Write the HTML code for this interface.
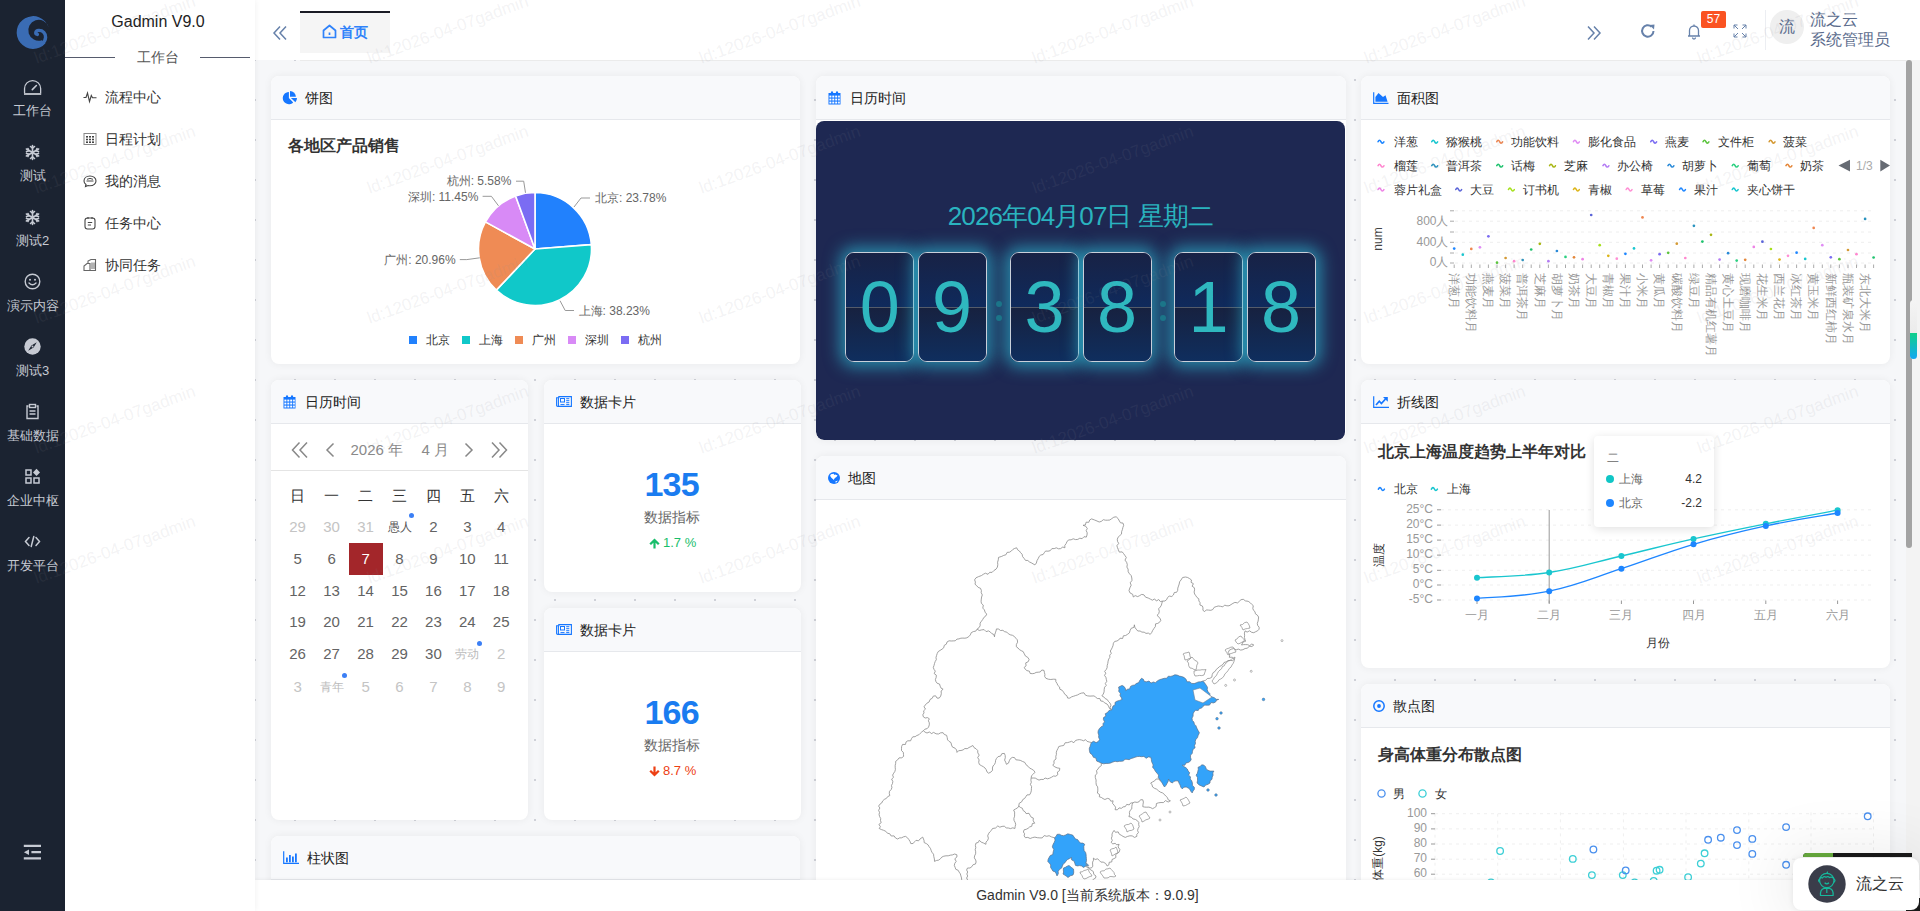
<!DOCTYPE html>
<html><head><meta charset="utf-8">
<style>
*{box-sizing:border-box;margin:0;padding:0}
html,body{width:1920px;height:911px;overflow:hidden;background:#f3f4f7;font-family:"Liberation Sans",sans-serif;color:#333}
.abs{position:absolute}
#s1{left:0;top:0;width:65px;height:911px;background:#1b2331}
#s2{left:65px;top:0;width:190px;height:911px;background:#fff;z-index:2;box-shadow:1px 0 6px rgba(0,0,0,0.05)}
#hd{left:255px;top:0;width:1665px;height:60px;background:#fff}
#ct{left:255px;top:60px;width:1665px;height:820px;background-color:#f6f7f9;
 background-image:radial-gradient(circle,#cfd1d8 1px,transparent 1.3px),radial-gradient(circle,#cfd1d8 1px,transparent 1.3px);background-size:40px 40px,40px 40px;background-position:-20px -20px,0 0}
#ft{left:255px;top:880px;width:1665px;height:31px;background:#fff;box-shadow:0 -1px 3px rgba(0,0,0,0.05);text-align:center;font-size:14px;line-height:31px;color:#333}
.card{position:absolute;background:#fff;border-radius:8px;box-shadow:0 0 8px rgba(0,0,0,0.06);overflow:hidden}
.ch{position:absolute;left:0;top:0;right:0;height:44px;background:#f8f9fb;border-bottom:1px solid #e6e8ec;font-size:14px;line-height:44px;color:#222}
.ch .t{position:absolute;left:34px;top:0}
.ch svg{position:absolute;left:12px;top:15px}
.mi{position:absolute;left:0;width:65px;text-align:center;color:#c6cad3;font-size:13px}
.mi .ic{position:absolute;left:24px;width:17px;height:17px}
.mt{position:absolute;left:0;width:65px;text-align:center;line-height:16px}
.sm{position:absolute;left:83px;font-size:14px;color:#333;line-height:16px}
.sm span{position:absolute;left:22px;top:0;white-space:nowrap}
.sm svg{position:absolute;left:0;top:1px}
.fd{position:absolute;top:176.2px;width:69px;height:109.5px;border:1.3px solid #c9d0da;border-radius:9px;overflow:hidden;box-shadow:0 0 16px 5px rgba(45,182,208,0.68),inset 0 0 12px rgba(45,175,200,0.25)}
.fdt{position:absolute;left:0;top:0;width:100%;height:50%;background:linear-gradient(#182245,#0f2a5c)}
.fdb{position:absolute;left:0;top:50%;width:100%;height:50%;background:linear-gradient(#17213f,#0f2e5e)}
.fdl{position:absolute;left:0;top:53.5px;width:100%;height:1.5px;background:#545b6a}
.fdn{position:absolute;left:0;top:0;width:100%;height:100%;text-align:center;font-size:72px;line-height:108px;color:#2fb8bf}
.fc{position:absolute;width:6px;height:6px;border-radius:50%;background:#1b7589}
.cd{position:absolute;width:34px;height:20px;line-height:20px;text-align:center;font-size:15px;white-space:nowrap}
.wm{position:absolute;font-size:17px;line-height:20px;white-space:nowrap;color:rgba(140,140,150,0.11);transform:rotate(-20deg);transform-origin:0 16px}
</style></head><body>
<div id="s1" class="abs">
<svg class="abs" style="left:0;top:0" width="65" height="65" viewBox="0 0 65 65">
<path d="M48.6 27.2 A16.4 16.4 0 1 0 45.5 43.2 L41.8 40.2 A10.4 10.4 0 1 1 48.6 27.2 Z" fill="#3a6cb4"/>
<path d="M37.4 34.4 C35 33.8 35.2 30.6 38.6 30.4 C43 30.2 45.8 33.5 45.6 37.3 C45.2 42.5 40.5 45.8 34 46" fill="none" stroke="#3a6cb4" stroke-width="3.4" stroke-linecap="round"/>
</svg>
<div class="mi" style="top:78px">
 <svg class="ic" style="top:1px;left:23px;width:19px;height:17px" viewBox="0 0 19 17" width="19" height="17"><path d="M1.55 14.2 V9.6 A8.05 8.05 0 0 1 17.65 9.6 V14.2" fill="none" stroke="#c6cad3" stroke-width="1.3"/><path d="M1 15 H18.2" stroke="#b4b8c0" stroke-width="2"/><path d="M9.3 10.6 L13.4 6.5" stroke="#c6cad3" stroke-width="1.6" stroke-linecap="round"/></svg>
 <div class="mt" style="top:25px">工作台</div></div>
<div class="mi" style="top:143px">
 <svg class="ic" style="top:1px" viewBox="0 0 17 17" width="17" height="17"><g stroke="#c6cad3" stroke-width="1.6" stroke-linecap="round"><path d="M8.5 1.5 V15.5 M2.4 5 L14.6 12 M2.4 12 L14.6 5"/><path d="M6.5 2.5 L8.5 4.2 L10.5 2.5 M6.5 14.5 L8.5 12.8 L10.5 14.5 M2.5 7.6 L4.8 7 L4 4.6 M14.5 9.4 L12.2 10 L13 12.4 M2.5 9.4 L4.8 10 L4 12.4 M14.5 7.6 L12.2 7 L13 4.6" fill="none"/></g></svg>
 <div class="mt" style="top:25px">测试</div></div>
<div class="mi" style="top:208px">
 <svg class="ic" style="top:1px" viewBox="0 0 17 17" width="17" height="17"><g stroke="#c6cad3" stroke-width="1.6" stroke-linecap="round"><path d="M8.5 1.5 V15.5 M2.4 5 L14.6 12 M2.4 12 L14.6 5"/><path d="M6.5 2.5 L8.5 4.2 L10.5 2.5 M6.5 14.5 L8.5 12.8 L10.5 14.5 M2.5 7.6 L4.8 7 L4 4.6 M14.5 9.4 L12.2 10 L13 12.4 M2.5 9.4 L4.8 10 L4 12.4 M14.5 7.6 L12.2 7 L13 4.6" fill="none"/></g></svg>
 <div class="mt" style="top:25px">测试2</div></div>
<div class="mi" style="top:273px">
 <svg class="ic" style="top:0" viewBox="0 0 17 17" width="19" height="19" style="left:23px"><circle cx="8.5" cy="8.5" r="7.3" fill="none" stroke="#c6cad3" stroke-width="1.4"/><circle cx="6" cy="6.8" r="1" fill="#c6cad3"/><circle cx="11" cy="6.8" r="1" fill="#c6cad3"/><path d="M5 10 Q8.5 13.5 12 10" fill="none" stroke="#c6cad3" stroke-width="1.4" stroke-linecap="round"/></svg>
 <div class="mt" style="top:25px">演示内容</div></div>
<div class="mi" style="top:338px">
 <svg class="ic" style="top:0" viewBox="0 0 17 17" width="17" height="17"><circle cx="8.5" cy="8.5" r="8.2" fill="#c6cad3"/><path d="M12.8 4.2 L9.6 9.6 L4.2 12.8 L7.4 7.4 Z" fill="#1b2331"/><circle cx="8.5" cy="8.5" r="1" fill="#c6cad3"/></svg>
 <div class="mt" style="top:25px">测试3</div></div>
<div class="mi" style="top:403px">
 <svg class="ic" style="top:0" viewBox="0 0 17 17" width="17" height="17"><g fill="none" stroke="#c6cad3" stroke-width="1.4"><path d="M4.5 3 H3 V15.5 H14 V3 H12.5"/><rect x="5.5" y="1.5" width="6" height="3"/><path d="M5.5 8 H11.5 M5.5 11 H11.5"/></g></svg>
 <div class="mt" style="top:25px">基础数据</div></div>
<div class="mi" style="top:468px">
 <svg class="ic" style="top:0" viewBox="0 0 17 17" width="17" height="17"><g fill="none" stroke="#c6cad3" stroke-width="1.5"><rect x="2" y="2" width="5" height="5"/><rect x="2" y="10" width="5" height="5"/><rect x="10" y="10" width="5" height="5"/></g><path d="M12.5 0.8 L16 4.4 L12.5 8 L9 4.4 Z" fill="#c6cad3"/></svg>
 <div class="mt" style="top:25px">企业中枢</div></div>
<div class="mi" style="top:533px">
 <svg class="ic" style="top:0" viewBox="0 0 17 17" width="17" height="17"><g fill="none" stroke="#c6cad3" stroke-width="1.5" stroke-linecap="round"><path d="M5 4.5 L1.5 8.5 L5 12.5 M12 4.5 L15.5 8.5 L12 12.5 M9.8 3.5 L7.2 13.5"/></g></svg>
 <div class="mt" style="top:25px">开发平台</div></div>
<svg class="abs" style="left:22px;top:843px" width="20" height="18" viewBox="0 0 20 18"><g stroke="#c6cad3" stroke-width="2.3" stroke-linecap="butt"><path d="M1.8 2.8 H19 M9.4 9.2 H19 M1.8 15.4 H19"/></g><path d="M7 6.5 L1.9 9.2 L7 12 Z" fill="#c6cad3"/></svg>
</div>
<div id="s2" class="abs">
<div class="abs" style="left:-2px;top:12px;width:190px;text-align:center;font-size:16px;line-height:20px;color:#222">Gadmin V9.0</div>
<div class="abs" style="left:0;top:57px;width:50px;height:1px;background:#565b6d"></div>
<div class="abs" style="left:135px;top:57px;width:50px;height:1px;background:#565b6d"></div>
<div class="abs" style="left:50px;top:48px;width:85px;text-align:center;font-size:14px;line-height:18px;color:#555">工作台</div>
<div class="sm" style="top:89px;left:18px"><svg width="14" height="14" viewBox="0 0 14 14"><path d="M0.5 7.5 H3 L4.5 3 L6.5 11.5 L8.3 5.5 L9.5 7.8 H13.5" fill="none" stroke="#444" stroke-width="1.1"/></svg><span>流程中心</span></div>
<div class="sm" style="top:131px;left:18px"><svg width="14" height="14" viewBox="0 0 14 14"><rect x="1" y="1.5" width="12" height="11" fill="none" stroke="#888" stroke-width="1"/><g fill="#444"><rect x="3" y="4" width="2" height="1.6"/><rect x="6" y="4" width="2" height="1.6"/><rect x="9" y="4" width="2" height="1.6"/><rect x="3" y="6.7" width="2" height="1.6"/><rect x="6" y="6.7" width="2" height="1.6"/><rect x="9" y="6.7" width="2" height="1.6"/><rect x="3" y="9.4" width="2" height="1.6"/><rect x="6" y="9.4" width="2" height="1.6"/><rect x="9" y="9.4" width="2" height="1.6"/></g></svg><span>日程计划</span></div>
<div class="sm" style="top:173px;left:18px"><svg width="14" height="14" viewBox="0 0 14 14"><path d="M7 2 C3.5 2 1 4.2 1 7 C1 8.5 1.8 9.7 3 10.5 L2.5 12.5 L5 11.5 C5.6 11.7 6.3 11.8 7 11.8 C10.5 11.8 13 9.6 13 7 C13 4.2 10.5 2 7 2 Z" fill="none" stroke="#444" stroke-width="1.1"/><path d="M3.5 7 H10.5 M4 5.3 Q7 3.5 10 5.3" fill="none" stroke="#444" stroke-width="1"/></svg><span>我的消息</span></div>
<div class="sm" style="top:215px;left:18px"><svg width="14" height="14" viewBox="0 0 14 14"><rect x="2" y="2" width="10" height="11" rx="2.5" fill="none" stroke="#444" stroke-width="1.1"/><path d="M5 1 V3 M9 1 V3 M4.8 6.5 H9.2 M4.8 9 H8" stroke="#444" stroke-width="1.1"/></svg><span>任务中心</span></div>
<div class="sm" style="top:257px;left:18px"><svg width="14" height="14" viewBox="0 0 14 14"><path d="M1 12.5 V8 L4 5.5 H7 V12.5 Z M5 5.5 V3 L8 1.5 H12.5 V12.5 H7" fill="none" stroke="#666" stroke-width="1.1"/><path d="M9 4.5 V11 M11 4.5 V11" stroke="#666" stroke-width="1"/></svg><span>协同任务</span></div>
</div>
<div id="hd" class="abs">
<svg class="abs" style="left:17px;top:25px" width="16" height="16" viewBox="0 0 16 16"><path d="M8 1.5 L2 8 L8 14.5 M14 1.5 L8 8 L14 14.5" fill="none" stroke="#6681aa" stroke-width="1.5"/></svg>
<div class="abs" style="left:45px;top:11px;width:90px;height:2px;background:#191b24"></div>
<div class="abs" style="left:45px;top:13px;width:90px;height:40px;background:#f5f5f5"></div>
<svg class="abs" style="left:67px;top:24px" width="15" height="15" viewBox="0 0 15 15"><path d="M1.5 6.5 L7.5 1.5 L13.5 6.5 V13.5 H1.5 Z" fill="none" stroke="#2f82fa" stroke-width="1.7" stroke-linejoin="round"/><path d="M7.5 8.5 V11" stroke="#2f82fa" stroke-width="1.7"/></svg>
<div class="abs" style="left:85px;top:23px;font-size:14px;line-height:18px;color:#2f82fa;font-weight:bold">首页</div>
<svg class="abs" style="left:1331px;top:25px" width="16" height="16" viewBox="0 0 16 16"><path d="M2 1.5 L8 8 L2 14.5 M8 1.5 L14 8 L8 14.5" fill="none" stroke="#6681aa" stroke-width="1.5"/></svg>
<svg class="abs" style="left:1385px;top:23px" width="16" height="16" viewBox="0 0 16 16"><path d="M13.5 8 A5.7 5.7 0 1 1 11.6 3.7" fill="none" stroke="#6681aa" stroke-width="2"/><path d="M9.5 2 L14.5 1.5 L14 6.5 Z" fill="#6681aa"/></svg>
<svg class="abs" style="left:1431px;top:23px" width="16" height="17" viewBox="0 0 16 17"><path d="M2 13 H14 M3.5 13 V7.5 A4.5 4.5 0 0 1 12.5 7.5 V13 M8 1.5 V3 M6.5 14.5 A1.5 1.5 0 0 0 9.5 14.5" fill="none" stroke="#6681aa" stroke-width="1.3"/></svg>
<div class="abs" style="left:1446px;top:11px;width:25px;height:17px;background:#fa5322;border-radius:2px;color:#fff;font-size:12px;line-height:17px;text-align:center">57</div>
<svg class="abs" style="left:1478px;top:24px" width="14" height="14" viewBox="0 0 14 14"><path d="M1 4.5 V1 H4.5 M9.5 1 H13 V4.5 M13 9.5 V13 H9.5 M4.5 13 H1 V9.5 M1 1 L5 5 M13 1 L9 5 M13 13 L9 9 M1 13 L5 9" fill="none" stroke="#6681aa" stroke-width="1"/></svg>
<div class="abs" style="left:1510px;top:10px;width:1px;height:40px;background:#eceef2"></div>
<div class="abs" style="left:1515px;top:10px;width:34px;height:34px;border-radius:50%;background:#efefef;color:#5a6b8c;font-size:16px;line-height:34px;text-align:center">流</div>
<div class="abs" style="left:1555px;top:10px;font-size:16px;line-height:19px;color:#5a6b8c">流之云</div>
<div class="abs" style="left:1555px;top:30px;font-size:16px;line-height:19px;color:#5a6b8c">系统管理员</div>
</div>
<div id="ct" class="abs"></div>
<div class="abs" style="left:300px;top:60px;width:1620px;height:1px;background:#ebebeb"></div>
<div id="cards">
<div class="card" style="left:271px;top:76px;width:529px;height:288px"><div class="ch"><svg style="left:11px;top:14px" width="16" height="16" viewBox="-1 -1 16 16"><path d="M5.9 1 A6.1 6.1 0 1 0 10.2 11.4 L5.9 7.1 Z" fill="#1677ff"/><path d="M7 5.8 V-0.1 A5.9 5.9 0 0 1 12.9 5.8 Z" fill="#1677ff"/><path d="M7.9 7.1 H14 A6.1 6.1 0 0 1 12.4 11.2 Z" fill="#1677ff"/></svg><span class="t">饼图</span></div><div class="abs" style="left:16.6px;top:60px;font-size:16px;font-weight:bold;line-height:20px;color:#333">各地区产品销售</div>
<svg class="abs" style="left:0;top:0" width="529" height="288" font-size="12" fill="#666" font-family="Liberation Sans, sans-serif"><path d="M264 173 L264.00 116.50 A56.5 56.5 0 0 1 320.33 168.67 Z" fill="#2181fd" stroke="#fff" stroke-width="1.6" stroke-linejoin="round"/><path d="M264 173 L320.33 168.67 A56.5 56.5 0 0 1 225.30 214.16 Z" fill="#10c8c9" stroke="#fff" stroke-width="1.6" stroke-linejoin="round"/><path d="M264 173 L225.30 214.16 A56.5 56.5 0 0 1 214.44 145.87 Z" fill="#ef8b55" stroke="#fff" stroke-width="1.6" stroke-linejoin="round"/><path d="M264 173 L214.44 145.87 A56.5 56.5 0 0 1 244.59 119.94 Z" fill="#d88af6" stroke="#fff" stroke-width="1.6" stroke-linejoin="round"/><path d="M264 173 L244.59 119.94 A56.5 56.5 0 0 1 264.00 116.50 Z" fill="#7b6cf3" stroke="#fff" stroke-width="1.6" stroke-linejoin="round"/><polyline points="303,131 310,122 319,122" fill="none" stroke="#999" stroke-width="1"/><polyline points="289,224.7 294.2,234.5 303,234.5" fill="none" stroke="#999" stroke-width="1"/><polyline points="208.8,181.8 195.8,183.6 188.8,183.6" fill="none" stroke="#999" stroke-width="1"/><polyline points="227.5,129.8 220.4,120.3 211.6,120.3" fill="none" stroke="#999" stroke-width="1"/><polyline points="254.5,116.8 252.7,105.2 245,105.2" fill="none" stroke="#999" stroke-width="1"/><text x="324" y="126.2" text-anchor="start">北京: 23.78%</text><text x="307.6" y="238.7" text-anchor="start">上海: 38.23%</text><text x="184.6" y="187.79999999999998" text-anchor="end">广州: 20.96%</text><text x="207.4" y="124.5" text-anchor="end">深圳: 11.45%</text><text x="240.4" y="108.7" text-anchor="end">杭州: 5.58%</text><rect x="138" y="260" width="8" height="8" fill="#2181fd"/><text x="154.6" y="268.3" fill="#333">北京</text><rect x="191" y="260" width="8" height="8" fill="#10c8c9"/><text x="207.6" y="268.3" fill="#333">上海</text><rect x="244" y="260" width="8" height="8" fill="#ef8b55"/><text x="260.6" y="268.3" fill="#333">广州</text><rect x="297" y="260" width="8" height="8" fill="#d88af6"/><text x="313.6" y="268.3" fill="#333">深圳</text><rect x="350" y="260" width="8" height="8" fill="#7b6cf3"/><text x="366.6" y="268.3" fill="#333">杭州</text></svg></div>
<div class="card" style="left:816px;top:76px;width:530px;height:364px"><div class="ch"><svg style="left:12px;top:15px" width="13" height="14" viewBox="0 0 13 14"><path d="M0.5 2 H12.5 V13.5 H0.5 Z" fill="#1677ff"/><rect x="3" y="0.3" width="2" height="3" rx="1" fill="#1677ff"/><rect x="8" y="0.3" width="2" height="3" rx="1" fill="#1677ff"/><g fill="#fff"><rect x="1.4" y="4.6" width="2" height="1.9"/><rect x="4.3" y="4.6" width="2" height="1.9"/><rect x="7.2" y="4.6" width="2" height="1.9"/><rect x="10.1" y="4.6" width="1.7" height="1.9"/><rect x="1.4" y="7.6" width="2" height="1.9"/><rect x="4.3" y="7.6" width="2" height="1.9"/><rect x="7.2" y="7.6" width="2" height="1.9"/><rect x="10.1" y="7.6" width="1.7" height="1.9"/><rect x="1.4" y="10.6" width="2" height="1.9"/><rect x="4.3" y="10.6" width="2" height="1.9"/><rect x="7.2" y="10.6" width="2" height="1.9"/><rect x="10.1" y="10.6" width="1.7" height="1.9"/></g></svg><span class="t">日历时间</span></div><div class="abs" style="left:0;top:45px;width:529px;height:319px;background:#1e2852;border-radius:8px;overflow:hidden">
</div>
<div class="abs" style="left:0;top:122px;width:529px;text-align:center;font-size:26px;line-height:36px;letter-spacing:-0.9px;color:#2ab3bf">2026年04月07日 星期二</div>
<div class="fd" style="left:29.4px"><div class="fdt"></div><div class="fdb"></div><div class="fdl"></div><div class="fdn">0</div></div><div class="fd" style="left:101.5px"><div class="fdt"></div><div class="fdb"></div><div class="fdl"></div><div class="fdn">9</div></div><div class="fd" style="left:194px"><div class="fdt"></div><div class="fdb"></div><div class="fdl"></div><div class="fdn">3</div></div><div class="fd" style="left:266.6px"><div class="fdt"></div><div class="fdb"></div><div class="fdl"></div><div class="fdn">8</div></div><div class="fd" style="left:358px"><div class="fdt"></div><div class="fdb"></div><div class="fdl"></div><div class="fdn">1</div></div><div class="fd" style="left:430.6px"><div class="fdt"></div><div class="fdb"></div><div class="fdl"></div><div class="fdn">8</div></div><div class="fc" style="left:179.7px;top:225px"></div><div class="fc" style="left:179.7px;top:239px"></div><div class="fc" style="left:343.5px;top:225px"></div><div class="fc" style="left:343.5px;top:239px"></div></div>
<div class="card" style="left:1361px;top:76px;width:529px;height:288px"><div class="ch"><svg style="left:12px;top:16px" width="16" height="12" viewBox="0 0 16 12"><path d="M0.7 0.3 V11.3 H15.5" fill="none" stroke="#1677ff" stroke-width="1.2"/><path d="M2.4 5.1 L5.5 1.1 L10 5.1 L12.5 3.2 L14.6 9.8 H2.4 Z" fill="#1677ff"/></svg><span class="t" style="left:36px">面积图</span></div><!--AREASTART--><svg class="abs" style="left:0;top:0" width="530" height="288" font-size="12" font-family="Liberation Sans, sans-serif"><path d="M17.1 65.7 Q18.5 62.9 19.9 65.7 T22.9 65.9" fill="none" stroke="#1e86ff" stroke-width="1.6" stroke-linecap="round"/><text x="32.6" y="69.8" fill="#333">洋葱</text><path d="M70.8 65.7 Q72.2 62.9 73.6 65.7 T76.6 65.9" fill="none" stroke="#19c6cf" stroke-width="1.6" stroke-linecap="round"/><text x="85.4" y="69.8" fill="#333">猕猴桃</text><path d="M135.8 65.7 Q137.2 62.9 138.6 65.7 T141.6 65.9" fill="none" stroke="#ef8650" stroke-width="1.6" stroke-linecap="round"/><text x="150.4" y="69.8" fill="#333">功能饮料</text><path d="M212.5 65.7 Q213.9 62.9 215.3 65.7 T218.3 65.9" fill="none" stroke="#e08cf4" stroke-width="1.6" stroke-linecap="round"/><text x="227" y="69.8" fill="#333">膨化食品</text><path d="M289.8 65.7 Q291.2 62.9 292.6 65.7 T295.6 65.9" fill="none" stroke="#7b6cf2" stroke-width="1.6" stroke-linecap="round"/><text x="303.9" y="69.8" fill="#333">燕麦</text><path d="M342.1 65.7 Q343.5 62.9 344.9 65.7 T347.9 65.9" fill="none" stroke="#5cc43e" stroke-width="1.6" stroke-linecap="round"/><text x="357" y="69.8" fill="#333">文件柜</text><path d="M408.2 65.7 Q409.6 62.9 411.0 65.7 T414.0 65.9" fill="none" stroke="#d49a35" stroke-width="1.6" stroke-linecap="round"/><text x="422" y="69.8" fill="#333">菠菜</text><path d="M17.1 89.6 Q18.5 86.8 19.9 89.6 T22.9 89.8" fill="none" stroke="#ff87cf" stroke-width="1.6" stroke-linecap="round"/><text x="32.6" y="93.7" fill="#333">榴莲</text><path d="M70.8 89.6 Q72.2 86.8 73.6 89.6 T76.6 89.8" fill="none" stroke="#2a93bf" stroke-width="1.6" stroke-linecap="round"/><text x="85.4" y="93.7" fill="#333">普洱茶</text><path d="M135.8 89.6 Q137.2 86.8 138.6 89.6 T141.6 89.8" fill="none" stroke="#1fc26e" stroke-width="1.6" stroke-linecap="round"/><text x="150.4" y="93.7" fill="#333">话梅</text><path d="M188.6 89.6 Q190.0 86.8 191.4 89.6 T194.4 89.8" fill="none" stroke="#a8b614" stroke-width="1.6" stroke-linecap="round"/><text x="203" y="93.7" fill="#333">芝麻</text><path d="M242.0 89.6 Q243.4 86.8 244.8 89.6 T247.8 89.8" fill="none" stroke="#b47cf4" stroke-width="1.6" stroke-linecap="round"/><text x="255.8" y="93.7" fill="#333">办公椅</text><path d="M307.0 89.6 Q308.4 86.8 309.8 89.6 T312.8 89.8" fill="none" stroke="#2a8ad8" stroke-width="1.6" stroke-linecap="round"/><text x="320.8" y="93.7" fill="#333">胡萝卜</text><path d="M371.3 89.6 Q372.7 86.8 374.1 89.6 T377.1 89.8" fill="none" stroke="#2bd080" stroke-width="1.6" stroke-linecap="round"/><text x="385.8" y="93.7" fill="#333">葡萄</text><path d="M425.0 89.6 Q426.4 86.8 427.8 89.6 T430.8 89.8" fill="none" stroke="#e4873a" stroke-width="1.6" stroke-linecap="round"/><text x="438.5" y="93.7" fill="#333">奶茶</text><path d="M17.1 113.5 Q18.5 110.7 19.9 113.5 T22.9 113.7" fill="none" stroke="#ee84e6" stroke-width="1.6" stroke-linecap="round"/><text x="32.6" y="117.6" fill="#333">蓉片礼盒</text><path d="M94.8 113.5 Q96.2 110.7 97.6 113.5 T100.6 113.7" fill="none" stroke="#5a64d8" stroke-width="1.6" stroke-linecap="round"/><text x="109.3" y="117.6" fill="#333">大豆</text><path d="M147.5 113.5 Q148.9 110.7 150.3 113.5 T153.3 113.7" fill="none" stroke="#a5e01c" stroke-width="1.6" stroke-linecap="round"/><text x="162" y="117.6" fill="#333">订书机</text><path d="M212.5 113.5 Q213.9 110.7 215.3 113.5 T218.3 113.7" fill="none" stroke="#dcb417" stroke-width="1.6" stroke-linecap="round"/><text x="227" y="117.6" fill="#333">青椒</text><path d="M265.2 113.5 Q266.6 110.7 268.0 113.5 T271.0 113.7" fill="none" stroke="#ff8fd4" stroke-width="1.6" stroke-linecap="round"/><text x="280.4" y="117.6" fill="#333">草莓</text><path d="M318.6 113.5 Q320.0 110.7 321.4 113.5 T324.4 113.7" fill="none" stroke="#1e86ff" stroke-width="1.6" stroke-linecap="round"/><text x="333" y="117.6" fill="#333">果汁</text><path d="M371.3 113.5 Q372.7 110.7 374.1 113.5 T377.1 113.7" fill="none" stroke="#19c6cf" stroke-width="1.6" stroke-linecap="round"/><text x="385.8" y="117.6" fill="#333">夹心饼干</text><path d="M477.5 89.6 L489 83.8 V95.4 Z" fill="#666b73"/><text x="495" y="93.7" fill="#aaa">1/3</text><path d="M529 89.6 L519.3 83.8 V95.4 Z" fill="#666b73"/><line x1="94" y1="187" x2="513" y2="187" stroke="#eeeeee" stroke-dasharray="3 4"/><line x1="89" y1="187" x2="93" y2="187" stroke="#aaa"/><line x1="94" y1="177" x2="513" y2="177" stroke="#eeeeee" stroke-dasharray="3 4"/><line x1="89" y1="177" x2="93" y2="177" stroke="#aaa"/><line x1="94" y1="166.3" x2="513" y2="166.3" stroke="#eeeeee" stroke-dasharray="3 4"/><line x1="89" y1="166.3" x2="93" y2="166.3" stroke="#aaa"/><line x1="94" y1="156" x2="513" y2="156" stroke="#eeeeee" stroke-dasharray="3 4"/><line x1="89" y1="156" x2="93" y2="156" stroke="#aaa"/><line x1="94" y1="145.2" x2="513" y2="145.2" stroke="#eeeeee" stroke-dasharray="3 4"/><line x1="89" y1="145.2" x2="93" y2="145.2" stroke="#aaa"/><line x1="94" y1="134.8" x2="513" y2="134.8" stroke="#eeeeee" stroke-dasharray="3 4"/><line x1="89" y1="134.8" x2="93" y2="134.8" stroke="#aaa"/><text x="87.5" y="190.3" text-anchor="end" fill="#999">0人</text><text x="87.5" y="169.6" text-anchor="end" fill="#999">400人</text><text x="87.5" y="148.5" text-anchor="end" fill="#999">800人</text><text transform="translate(20.5 163) rotate(-90)" text-anchor="middle" fill="#444">num</text><line x1="93.2" y1="188.5" x2="93.2" y2="192" stroke="#aaa"/><circle cx="93.2" cy="172.6" r="1.35" fill="#1e86ff"/><text transform="translate(88.9 196.5) rotate(90)" fill="#999">洋葱月</text><line x1="101.8" y1="188.5" x2="101.8" y2="192" stroke="#aaa"/><circle cx="101.8" cy="178.7" r="1.35" fill="#19c6cf"/><line x1="110.3" y1="188.5" x2="110.3" y2="192" stroke="#aaa"/><circle cx="110.3" cy="172.9" r="1.35" fill="#ef8650"/><text transform="translate(106.0 196.5) rotate(90)" fill="#999">功能饮料月</text><line x1="118.9" y1="188.5" x2="118.9" y2="192" stroke="#aaa"/><circle cx="118.9" cy="171.3" r="1.35" fill="#e08cf4"/><line x1="127.4" y1="188.5" x2="127.4" y2="192" stroke="#aaa"/><circle cx="127.4" cy="160.3" r="1.35" fill="#7b6cf2"/><text transform="translate(123.1 196.5) rotate(90)" fill="#999">燕麦月</text><line x1="136.0" y1="188.5" x2="136.0" y2="192" stroke="#aaa"/><circle cx="136.0" cy="186.7" r="1.35" fill="#5cc43e"/><line x1="144.6" y1="188.5" x2="144.6" y2="192" stroke="#aaa"/><circle cx="144.6" cy="182.0" r="1.35" fill="#d49a35"/><text transform="translate(140.3 196.5) rotate(90)" fill="#999">菠菜月</text><line x1="153.1" y1="188.5" x2="153.1" y2="192" stroke="#aaa"/><circle cx="153.1" cy="185.2" r="1.35" fill="#ff87cf"/><line x1="161.7" y1="188.5" x2="161.7" y2="192" stroke="#aaa"/><circle cx="161.7" cy="184.0" r="1.35" fill="#2a93bf"/><text transform="translate(157.4 196.5) rotate(90)" fill="#999">普洱茶月</text><line x1="170.2" y1="188.5" x2="170.2" y2="192" stroke="#aaa"/><circle cx="170.2" cy="173.5" r="1.35" fill="#1fc26e"/><line x1="178.8" y1="188.5" x2="178.8" y2="192" stroke="#aaa"/><circle cx="178.8" cy="167.8" r="1.35" fill="#a8b614"/><text transform="translate(174.5 196.5) rotate(90)" fill="#999">芝麻月</text><line x1="187.4" y1="188.5" x2="187.4" y2="192" stroke="#aaa"/><circle cx="187.4" cy="185.2" r="1.35" fill="#b47cf4"/><line x1="195.9" y1="188.5" x2="195.9" y2="192" stroke="#aaa"/><circle cx="195.9" cy="175.0" r="1.35" fill="#2a8ad8"/><text transform="translate(191.6 196.5) rotate(90)" fill="#999">胡萝卜月</text><line x1="204.5" y1="188.5" x2="204.5" y2="192" stroke="#aaa"/><circle cx="204.5" cy="180.9" r="1.35" fill="#2bd080"/><line x1="213.0" y1="188.5" x2="213.0" y2="192" stroke="#aaa"/><circle cx="213.0" cy="181.3" r="1.35" fill="#e4873a"/><text transform="translate(208.7 196.5) rotate(90)" fill="#999">奶茶月</text><line x1="221.6" y1="188.5" x2="221.6" y2="192" stroke="#aaa"/><circle cx="221.6" cy="183.2" r="1.35" fill="#ee84e6"/><line x1="230.2" y1="188.5" x2="230.2" y2="192" stroke="#aaa"/><circle cx="230.2" cy="139.0" r="1.35" fill="#5a64d8"/><text transform="translate(225.9 196.5) rotate(90)" fill="#999">大豆月</text><line x1="238.7" y1="188.5" x2="238.7" y2="192" stroke="#aaa"/><circle cx="238.7" cy="169.2" r="1.35" fill="#a5e01c"/><line x1="247.3" y1="188.5" x2="247.3" y2="192" stroke="#aaa"/><circle cx="247.3" cy="179.8" r="1.35" fill="#dcb417"/><text transform="translate(243.0 196.5) rotate(90)" fill="#999">青椒月</text><line x1="255.8" y1="188.5" x2="255.8" y2="192" stroke="#aaa"/><circle cx="255.8" cy="182.7" r="1.35" fill="#ff8fd4"/><line x1="264.4" y1="188.5" x2="264.4" y2="192" stroke="#aaa"/><circle cx="264.4" cy="177.8" r="1.35" fill="#1e86ff"/><text transform="translate(260.1 196.5) rotate(90)" fill="#999">果汁月</text><line x1="273.0" y1="188.5" x2="273.0" y2="192" stroke="#aaa"/><circle cx="273.0" cy="172.4" r="1.35" fill="#19c6cf"/><line x1="281.5" y1="188.5" x2="281.5" y2="192" stroke="#aaa"/><circle cx="281.5" cy="141.4" r="1.35" fill="#ef8650"/><text transform="translate(277.2 196.5) rotate(90)" fill="#999">小米月</text><line x1="290.1" y1="188.5" x2="290.1" y2="192" stroke="#aaa"/><circle cx="290.1" cy="184.3" r="1.35" fill="#e08cf4"/><line x1="298.6" y1="188.5" x2="298.6" y2="192" stroke="#aaa"/><circle cx="298.6" cy="178.2" r="1.35" fill="#7b6cf2"/><text transform="translate(294.3 196.5) rotate(90)" fill="#999">黄瓜月</text><line x1="307.2" y1="188.5" x2="307.2" y2="192" stroke="#aaa"/><circle cx="307.2" cy="176.8" r="1.35" fill="#5cc43e"/><line x1="315.8" y1="188.5" x2="315.8" y2="192" stroke="#aaa"/><circle cx="315.8" cy="167.7" r="1.35" fill="#d49a35"/><text transform="translate(311.5 196.5) rotate(90)" fill="#999">碳酸饮料月</text><line x1="324.3" y1="188.5" x2="324.3" y2="192" stroke="#aaa"/><circle cx="324.3" cy="182.0" r="1.35" fill="#ff87cf"/><line x1="332.9" y1="188.5" x2="332.9" y2="192" stroke="#aaa"/><circle cx="332.9" cy="149.8" r="1.35" fill="#2a93bf"/><text transform="translate(328.6 196.5) rotate(90)" fill="#999">绿豆月</text><line x1="341.4" y1="188.5" x2="341.4" y2="192" stroke="#aaa"/><circle cx="341.4" cy="165.6" r="1.35" fill="#1fc26e"/><line x1="350.0" y1="188.5" x2="350.0" y2="192" stroke="#aaa"/><circle cx="350.0" cy="158.8" r="1.35" fill="#a8b614"/><text transform="translate(345.7 196.5) rotate(90)" fill="#999">精品有机红薯月</text><line x1="358.6" y1="188.5" x2="358.6" y2="192" stroke="#aaa"/><circle cx="358.6" cy="183.6" r="1.35" fill="#b47cf4"/><line x1="367.1" y1="188.5" x2="367.1" y2="192" stroke="#aaa"/><circle cx="367.1" cy="177.2" r="1.35" fill="#2a8ad8"/><text transform="translate(362.8 196.5) rotate(90)" fill="#999">黄心土豆月</text><line x1="375.7" y1="188.5" x2="375.7" y2="192" stroke="#aaa"/><circle cx="375.7" cy="184.6" r="1.35" fill="#2bd080"/><line x1="384.2" y1="188.5" x2="384.2" y2="192" stroke="#aaa"/><circle cx="384.2" cy="183.8" r="1.35" fill="#e4873a"/><text transform="translate(379.9 196.5) rotate(90)" fill="#999">现磨咖啡月</text><line x1="392.8" y1="188.5" x2="392.8" y2="192" stroke="#aaa"/><circle cx="392.8" cy="170.9" r="1.35" fill="#ee84e6"/><line x1="401.4" y1="188.5" x2="401.4" y2="192" stroke="#aaa"/><circle cx="401.4" cy="165.7" r="1.35" fill="#5a64d8"/><text transform="translate(397.1 196.5) rotate(90)" fill="#999">花生米月</text><line x1="409.9" y1="188.5" x2="409.9" y2="192" stroke="#aaa"/><circle cx="409.9" cy="173.0" r="1.35" fill="#a5e01c"/><line x1="418.5" y1="188.5" x2="418.5" y2="192" stroke="#aaa"/><circle cx="418.5" cy="183.6" r="1.35" fill="#dcb417"/><text transform="translate(414.2 196.5) rotate(90)" fill="#999">西兰花月</text><line x1="427.0" y1="188.5" x2="427.0" y2="192" stroke="#aaa"/><circle cx="427.0" cy="179.8" r="1.35" fill="#ff8fd4"/><line x1="435.6" y1="188.5" x2="435.6" y2="192" stroke="#aaa"/><circle cx="435.6" cy="176.7" r="1.35" fill="#1e86ff"/><text transform="translate(431.3 196.5) rotate(90)" fill="#999">冰红茶月</text><line x1="444.2" y1="188.5" x2="444.2" y2="192" stroke="#aaa"/><circle cx="444.2" cy="182.9" r="1.35" fill="#19c6cf"/><line x1="452.7" y1="188.5" x2="452.7" y2="192" stroke="#aaa"/><circle cx="452.7" cy="151.9" r="1.35" fill="#ef8650"/><text transform="translate(448.4 196.5) rotate(90)" fill="#999">黄玉米月</text><line x1="461.3" y1="188.5" x2="461.3" y2="192" stroke="#aaa"/><circle cx="461.3" cy="169.2" r="1.35" fill="#e08cf4"/><line x1="469.8" y1="188.5" x2="469.8" y2="192" stroke="#aaa"/><circle cx="469.8" cy="181.3" r="1.35" fill="#7b6cf2"/><text transform="translate(465.5 196.5) rotate(90)" fill="#999">新鲜西红柿月</text><line x1="478.4" y1="188.5" x2="478.4" y2="192" stroke="#aaa"/><circle cx="478.4" cy="183.2" r="1.35" fill="#5cc43e"/><line x1="487.0" y1="188.5" x2="487.0" y2="192" stroke="#aaa"/><circle cx="487.0" cy="174.0" r="1.35" fill="#d49a35"/><text transform="translate(482.7 196.5) rotate(90)" fill="#999">瓶装矿泉水月</text><line x1="495.5" y1="188.5" x2="495.5" y2="192" stroke="#aaa"/><circle cx="495.5" cy="178.2" r="1.35" fill="#ff87cf"/><line x1="504.1" y1="188.5" x2="504.1" y2="192" stroke="#aaa"/><circle cx="504.1" cy="142.9" r="1.35" fill="#2a93bf"/><text transform="translate(499.8 196.5) rotate(90)" fill="#999">东北大米月</text><line x1="512.6" y1="188.5" x2="512.6" y2="192" stroke="#aaa"/><circle cx="512.6" cy="181.5" r="1.35" fill="#1fc26e"/></svg><!--AREAEND--></div>
<div class="card" style="left:271px;top:380px;width:257px;height:440px"><div class="ch"><svg style="left:12px;top:15px" width="13" height="14" viewBox="0 0 13 14"><path d="M0.5 2 H12.5 V13.5 H0.5 Z" fill="#1677ff"/><rect x="3" y="0.3" width="2" height="3" rx="1" fill="#1677ff"/><rect x="8" y="0.3" width="2" height="3" rx="1" fill="#1677ff"/><g fill="#fff"><rect x="1.4" y="4.6" width="2" height="1.9"/><rect x="4.3" y="4.6" width="2" height="1.9"/><rect x="7.2" y="4.6" width="2" height="1.9"/><rect x="10.1" y="4.6" width="1.7" height="1.9"/><rect x="1.4" y="7.6" width="2" height="1.9"/><rect x="4.3" y="7.6" width="2" height="1.9"/><rect x="7.2" y="7.6" width="2" height="1.9"/><rect x="10.1" y="7.6" width="1.7" height="1.9"/><rect x="1.4" y="10.6" width="2" height="1.9"/><rect x="4.3" y="10.6" width="2" height="1.9"/><rect x="7.2" y="10.6" width="2" height="1.9"/><rect x="10.1" y="10.6" width="1.7" height="1.9"/></g></svg><span class="t">日历时间</span></div><svg class="abs" style="left:0;top:55px" width="257" height="30" viewBox="0 0 257 30"><g fill="none" stroke="#888" stroke-width="1.5"><path d="M28.5 7.5 L21.5 15 L28.5 22.5 M36 7.5 L29 15 L36 22.5"/><path d="M62.5 8.5 L56 15 L62.5 21.5"/><path d="M194.5 8.5 L201 15 L194.5 21.5"/><path d="M221 7.5 L228 15 L221 22.5 M228.5 7.5 L235.5 15 L228.5 22.5"/></g></svg>
<div class="abs" style="left:79.5px;top:60px;font-size:15px;line-height:20px;color:#8a8a8a;white-space:nowrap">2026 年</div>
<div class="abs" style="left:150.5px;top:60px;font-size:15px;line-height:20px;color:#8a8a8a;white-space:nowrap">4 月</div>
<div class="abs" style="left:0;top:90px;width:257px;height:1px;background:#e4e4e4"></div><div class="cd" style="left:9.600000000000001px;top:106px;color:#333">日</div><div class="cd" style="left:43.6px;top:106px;color:#333">一</div><div class="cd" style="left:77.6px;top:106px;color:#333">二</div><div class="cd" style="left:111.5px;top:106px;color:#333">三</div><div class="cd" style="left:145.4px;top:106px;color:#333">四</div><div class="cd" style="left:179.3px;top:106px;color:#333">五</div><div class="cd" style="left:213.2px;top:106px;color:#333">六</div><div class="cd" style="left:9.600000000000001px;top:136.5px;color:#c4c4c4">29</div><div class="cd" style="left:43.6px;top:136.5px;color:#c4c4c4">30</div><div class="cd" style="left:77.6px;top:136.5px;color:#c4c4c4">31</div><div class="cd" style="left:111.5px;top:136.5px;color:#555;font-size:12px">愚人</div><div class="cd" style="left:145.4px;top:136.5px;color:#636363">2</div><div class="cd" style="left:179.3px;top:136.5px;color:#636363">3</div><div class="cd" style="left:213.2px;top:136.5px;color:#636363">4</div><div class="cd" style="left:9.600000000000001px;top:168.9px;color:#636363">5</div><div class="cd" style="left:43.6px;top:168.9px;color:#636363">6</div><div class="abs" style="left:78px;top:163px;width:34px;height:32px;background:#a3262a"></div><div class="cd" style="left:77.6px;top:168.9px;color:#fff">7</div><div class="cd" style="left:111.5px;top:168.9px;color:#636363">8</div><div class="cd" style="left:145.4px;top:168.9px;color:#636363">9</div><div class="cd" style="left:179.3px;top:168.9px;color:#636363">10</div><div class="cd" style="left:213.2px;top:168.9px;color:#636363">11</div><div class="cd" style="left:9.600000000000001px;top:200.7px;color:#636363">12</div><div class="cd" style="left:43.6px;top:200.7px;color:#636363">13</div><div class="cd" style="left:77.6px;top:200.7px;color:#636363">14</div><div class="cd" style="left:111.5px;top:200.7px;color:#636363">15</div><div class="cd" style="left:145.4px;top:200.7px;color:#636363">16</div><div class="cd" style="left:179.3px;top:200.7px;color:#636363">17</div><div class="cd" style="left:213.2px;top:200.7px;color:#636363">18</div><div class="cd" style="left:9.600000000000001px;top:232.4px;color:#636363">19</div><div class="cd" style="left:43.6px;top:232.4px;color:#636363">20</div><div class="cd" style="left:77.6px;top:232.4px;color:#636363">21</div><div class="cd" style="left:111.5px;top:232.4px;color:#636363">22</div><div class="cd" style="left:145.4px;top:232.4px;color:#636363">23</div><div class="cd" style="left:179.3px;top:232.4px;color:#636363">24</div><div class="cd" style="left:213.2px;top:232.4px;color:#636363">25</div><div class="cd" style="left:9.600000000000001px;top:264.2px;color:#636363">26</div><div class="cd" style="left:43.6px;top:264.2px;color:#636363">27</div><div class="cd" style="left:77.6px;top:264.2px;color:#636363">28</div><div class="cd" style="left:111.5px;top:264.2px;color:#636363">29</div><div class="cd" style="left:145.4px;top:264.2px;color:#636363">30</div><div class="cd" style="left:179.3px;top:264.2px;color:#bbb;font-size:12px">劳动</div><div class="cd" style="left:213.2px;top:264.2px;color:#c4c4c4">2</div><div class="cd" style="left:9.600000000000001px;top:296.5px;color:#c4c4c4">3</div><div class="cd" style="left:43.6px;top:296.5px;color:#bbb;font-size:12px">青年</div><div class="cd" style="left:77.6px;top:296.5px;color:#c4c4c4">5</div><div class="cd" style="left:111.5px;top:296.5px;color:#c4c4c4">6</div><div class="cd" style="left:145.4px;top:296.5px;color:#c4c4c4">7</div><div class="cd" style="left:179.3px;top:296.5px;color:#c4c4c4">8</div><div class="cd" style="left:213.2px;top:296.5px;color:#c4c4c4">9</div><div class="abs" style="left:138.0px;top:133.0px;width:5.2px;height:5.2px;border-radius:50%;background:#3b7ff5"></div><div class="abs" style="left:205.9px;top:260.7px;width:5.2px;height:5.2px;border-radius:50%;background:#3b7ff5"></div><div class="abs" style="left:70.7px;top:292.59999999999997px;width:5.2px;height:5.2px;border-radius:50%;background:#3b7ff5"></div></div>
<div class="card" style="left:544px;top:380px;width:257px;height:212px"><div class="ch"><svg style="left:12px;top:16px" width="16" height="11" viewBox="0 0 16 11"><path d="M2.8 0.6 H15.4 V10.4 H1.8 Q0.6 10.4 0.6 9.2 V1.8 H2.8 Z M2.4 1.8 V10.2" fill="none" stroke="#1677ff" stroke-width="1.1"/><rect x="4.5" y="2.5" width="4" height="3.5" fill="none" stroke="#1677ff" stroke-width="1"/><path d="M10.2 2.7 H13.3 M10.2 4.7 H13.3 M10.2 6.7 H13.3 M4.5 8.6 H8.5 M10.2 8.6 H13.3" stroke="#1677ff" stroke-width="1"/></svg><span class="t" style="left:36px">数据卡片</span></div><div class="abs" style="left:0;top:84.3px;width:256px;text-align:center;font-size:34px;font-weight:bold;line-height:40px;letter-spacing:-0.8px;text-indent:-0.8px;color:#1a7cf0">135</div>
<div class="abs" style="left:0;top:128px;width:256px;text-align:center;font-size:14px;line-height:18px;color:#666">数据指标</div>
<svg class="abs" style="left:104.5px;top:157.5px" width="11" height="11" viewBox="0 0 11 11"><path d="M5.5 0.6 L10.6 5.6 L9 7.1 L6.6 4.7 V10.4 H4.4 V4.7 L2 7.1 L0.4 5.6 Z" fill="#19be6b"/></svg>
<div class="abs" style="left:119px;top:154.5px;font-size:13px;line-height:16px;color:#19be6b;white-space:nowrap">1.7 %</div></div>
<div class="card" style="left:544px;top:608px;width:257px;height:212px"><div class="ch"><svg style="left:12px;top:16px" width="16" height="11" viewBox="0 0 16 11"><path d="M2.8 0.6 H15.4 V10.4 H1.8 Q0.6 10.4 0.6 9.2 V1.8 H2.8 Z M2.4 1.8 V10.2" fill="none" stroke="#1677ff" stroke-width="1.1"/><rect x="4.5" y="2.5" width="4" height="3.5" fill="none" stroke="#1677ff" stroke-width="1"/><path d="M10.2 2.7 H13.3 M10.2 4.7 H13.3 M10.2 6.7 H13.3 M4.5 8.6 H8.5 M10.2 8.6 H13.3" stroke="#1677ff" stroke-width="1"/></svg><span class="t" style="left:36px">数据卡片</span></div><div class="abs" style="left:0;top:84.3px;width:256px;text-align:center;font-size:34px;font-weight:bold;line-height:40px;letter-spacing:-0.8px;text-indent:-0.8px;color:#1a7cf0">166</div>
<div class="abs" style="left:0;top:128px;width:256px;text-align:center;font-size:14px;line-height:18px;color:#666">数据指标</div>
<svg class="abs" style="left:104.5px;top:157.5px" width="11" height="11" viewBox="0 0 11 11"><path d="M5.5 10.4 L10.6 5.4 L9 3.9 L6.6 6.3 V0.6 H4.4 V6.3 L2 3.9 L0.4 5.4 Z" fill="#ed4014"/></svg>
<div class="abs" style="left:119px;top:154.5px;font-size:13px;line-height:16px;color:#ed4014;white-space:nowrap">8.7 %</div></div>
<div class="card" style="left:816px;top:456px;width:530px;height:500px"><div class="ch"><svg style="left:12px;top:16px" width="12" height="12" viewBox="0 0 12 12"><circle cx="6" cy="6" r="6" fill="#1677ff"/><path d="M2.1 3.4 L3 2.2 L5.6 1.7 L9.6 3.4 L8.4 4.9 L6.9 6 L5.9 7.4 L6.4 8.5 L5.1 7.2 L3.6 5.9 L2.5 4.6 Z M7.1 9.8 L9.7 8.6 L8.8 10.2 L7.6 10.5 Z" fill="#fff"/><circle cx="6.4" cy="2.6" r="0.5" fill="#1677ff"/></svg><span class="t" style="left:32px">地图</span></div><!--MAPSTART--><svg class="abs" style="left:0;top:0" width="529" height="440"><path d="M295.6 253.9 L296.3 251.9 L297.0 250.0 L299.1 248.9 L299.0 246.4 L300.9 245.2 L303.5 244.4 L306.1 243.4 L305.2 241.4 L304.0 239.6 L304.4 237.2 L302.7 235.5 L303.0 233.2 L302.6 231.1 L306.1 229.4 L308.1 230.6 L309.3 232.3 L309.7 234.6 L311.4 233.3 L313.6 232.9 L314.5 230.4 L316.3 229.4 L318.6 229.0 L320.2 227.6 L322.7 226.6 L323.9 224.2 L325.5 222.3 L327.4 223.3 L328.4 225.5 L330.7 225.8 L333.0 225.0 L335.0 227.1 L337.3 226.0 L339.5 226.7 L341.3 224.9 L343.5 223.7 L345.9 223.0 L348.3 222.3 L350.6 222.3 L352.3 220.2 L354.7 220.4 L356.8 219.8 L358.8 218.8 L361.2 219.1 L363.4 220.1 L365.8 220.6 L368.3 221.6 L370.0 223.3 L371.1 225.8 L373.6 225.7 L375.7 227.4 L378.1 227.6 L380.3 226.8 L382.4 225.9 L384.8 225.8 L386.9 225.0 L388.7 227.1 L390.4 229.4 L391.5 231.4 L391.2 233.8 L392.1 235.8 L393.8 237.6 L393.9 239.9 L396.0 240.9 L398.3 241.7 L400.2 243.3 L402.7 243.4 L400.7 244.1 L399.5 246.1 L397.5 246.9 L395.0 246.6 L393.5 249.1 L391.2 249.2 L388.8 249.1 L386.9 250.4 L385.6 252.1 L383.4 252.5 L382.2 254.5 L379.7 254.3 L378.1 255.7 L377.1 257.8 L377.1 260.1 L376.0 262.1 L376.4 264.5 L377.9 266.0 L378.4 268.2 L379.9 269.7 L380.9 272.2 L382.1 274.5 L383.4 276.8 L382.1 279.6 L381.5 281.6 L380.0 283.3 L379.2 285.2 L379.5 287.5 L378.5 289.4 L379.1 291.8 L377.1 293.3 L376.5 295.3 L376.2 297.4 L374.6 299.1 L374.5 301.2 L375.2 303.4 L374.2 305.3 L372.3 306.5 L370.1 306.9 L368.8 309.2 L366.3 309.2 L367.8 310.6 L369.8 311.6 L371.3 313.0 L372.2 315.1 L373.7 316.8 L372.6 319.2 L374.5 320.8 L374.2 323.0 L375.7 324.7 L376.4 326.9 L376.4 329.4 L378.2 331.0 L378.4 333.3 L377.0 335.0 L376.2 336.9 L374.8 335.3 L373.8 333.3 L372.2 332.0 L370.2 331.0 L367.9 331.2 L366.3 332.9 L364.8 331.2 L364.1 329.0 L363.0 327.1 L362.3 325.0 L360.0 324.8 L358.0 325.3 L356.4 327.0 L353.9 325.6 L352.5 323.0 L352.2 325.3 L351.1 327.3 L350.0 329.3 L348.5 331.0 L347.2 329.0 L346.1 326.9 L344.6 325.0 L343.4 323.2 L342.2 321.4 L342.6 319.1 L341.0 317.2 L339.4 315.3 L338.2 313.1 L336.6 311.2 L337.2 309.0 L336.3 307.2 L335.5 305.3 L335.3 303.2 L334.7 301.3 L332.4 300.9 L330.2 302.3 L327.9 300.4 L325.7 300.7 L323.4 300.4 L321.2 300.6 L318.9 301.3 L317.0 302.0 L315.0 302.5 L313.2 303.7 L311.0 303.3 L309.0 303.3 L307.2 305.0 L305.2 305.3 L303.2 305.3 L301.2 305.7 L299.1 305.3 L296.9 306.0 L294.6 307.0 L292.4 307.4 L290.0 307.4 L287.7 307.8 L285.3 307.2 L283.1 306.0 L280.7 305.1 L279.9 302.1 L277.4 301.3 L276.3 298.9 L274.0 297.1 L273.4 294.4 L273.3 292.3 L274.1 290.4 L274.6 288.4 L275.4 286.5 L277.6 285.3 L280.1 286.6 L282.3 285.5 L283.6 283.5 L282.6 281.2 L282.8 279.1 L282.0 276.9 L282.2 274.8 L283.3 272.7 L285.0 270.9 L287.2 269.7 L287.0 267.6 L288.6 265.9 L287.4 263.6 L287.5 261.6 L289.9 260.0 L289.2 257.8 L291.4 256.6 L293.0 254.5 L295.6 253.9 Z" fill="#33a3fa" stroke="#5c6f86" stroke-width="0.7"/><path d="M382.1 311.2 L384.1 310.6 L385.7 308.8 L388.0 309.2 L389.5 310.7 L390.2 312.9 L391.9 314.2 L394.0 315.1 L397.9 315.1 L396.8 316.9 L397.1 319.2 L396.2 321.1 L396.0 323.3 L394.1 324.8 L394.0 327.0 L392.0 328.3 L389.6 329.1 L388.0 331.0 L385.5 330.0 L383.1 328.9 L381.1 327.0 L381.5 324.3 L381.5 321.6 L380.1 319.1 L381.4 317.3 L381.8 315.3 L382.3 313.4 L382.1 311.2 Z" fill="#33a3fa" stroke="#5c6f86" stroke-width="0.7"/><path d="M238.4 381.7 L240.1 380.4 L241.0 378.4 L243.3 378.2 L245.4 379.3 L247.6 379.7 L249.7 378.9 L251.8 377.8 L254.2 378.4 L256.7 379.1 L258.1 381.1 L259.5 383.0 L261.6 383.6 L263.0 385.5 L264.5 387.1 L266.9 387.1 L268.7 388.3 L267.8 390.4 L267.9 392.5 L268.1 394.5 L269.6 396.5 L270.1 398.5 L270.2 400.5 L270.4 402.6 L270.5 404.6 L270.0 406.7 L272.7 409.4 L269.9 410.1 L267.4 411.4 L265.7 410.0 L263.6 409.6 L261.5 409.9 L259.5 409.4 L258.8 407.3 L258.1 405.1 L255.6 403.9 L255.5 401.5 L253.6 402.5 L251.7 403.4 L250.2 404.9 L249.0 406.7 L247.2 408.0 L246.4 410.0 L245.6 412.1 L243.7 413.3 L242.2 415.2 L242.3 417.8 L241.0 419.9 L240.2 417.8 L239.3 415.9 L236.9 415.1 L235.8 413.3 L234.6 411.4 L234.7 408.9 L233.3 407.1 L231.8 405.4 L232.2 403.2 L233.2 401.3 L234.3 399.5 L236.8 398.5 L237.1 396.2 L237.8 393.6 L236.3 390.9 L237.1 388.3 L238.3 386.2 L239.1 384.1 L238.4 381.7 Z" fill="#33a3fa" stroke="#5c6f86" stroke-width="0.7"/><path d="M247.5 412.0 L249.4 411.3 L251.1 410.2 L253.0 409.5 L255.2 411.3 L257.5 413.0 L257.7 415.0 L257.7 417.0 L257.0 419.0 L254.3 419.8 L252.0 421.5 L250.4 420.2 L248.7 419.1 L247.0 418.0 L247.6 416.0 L247.3 414.0 L247.5 412.0 Z" fill="#33a3fa" stroke="#5c6f86" stroke-width="0.7"/><path d="M377 234 L384 232 L396 241 L387 247 L379 244 Z" fill="#fff" stroke="#6c7f96" stroke-width="0.6"/><path d="M161.1 173.1 L163.0 171.7 L164.1 169.8 L164.1 167.1 L165.4 165.3 L166.7 163.5 L167.8 161.5 L169.7 160.1 L170.7 158.1 L169.1 156.2 L168.4 153.9 L166.8 152.1 L167.3 149.1 L165.4 147.4 L165.1 145.3 L165.3 143.1 L165.6 141.0 L166.3 138.9 L165.2 136.7 L165.4 134.6 L164.5 132.3 L162.2 131.4 L160.7 129.7 L159.0 128.2 L159.4 126.1 L158.6 123.8 L160.0 121.8 L162.6 120.6 L165.4 119.6 L167.3 118.3 L169.4 117.2 L172.0 118.3 L173.7 116.3 L176.1 116.4 L177.8 114.6 L180.0 113.2 L181.4 111.1 L181.8 108.7 L181.6 106.2 L182.3 103.8 L182.5 101.4 L185.7 100.4 L187.7 99.4 L189.9 98.8 L191.1 96.4 L193.5 96.2 L195.4 95.0 L196.9 93.4 L198.7 92.4 L200.7 91.8 L201.6 93.8 L203.4 95.0 L204.6 96.7 L206.1 98.2 L206.6 100.6 L208.2 102.5 L209.5 104.4 L211.8 104.5 L213.4 105.9 L215.3 106.8 L217.1 107.9 L218.9 108.9 L220.4 107.0 L221.0 104.6 L222.2 102.6 L223.2 100.4 L224.8 99.0 L227.1 98.5 L228.3 96.7 L229.6 95.0 L232.0 95.2 L234.2 94.7 L235.9 92.6 L238.2 92.6 L240.3 91.8 L242.5 92.8 L244.6 92.6 L246.8 91.0 L248.9 91.8 L248.8 89.4 L250.2 87.5 L251.0 85.4 L252.9 83.9 L255.1 83.8 L257.2 82.8 L259.6 83.6 L261.8 83.4 L263.8 82.2 L266.1 82.7 L268.0 80.7 L270.3 81.1 L271.0 79.0 L271.2 76.8 L270.2 74.6 L271.3 72.5 L269.7 70.2 L267.0 69.3 L269.4 68.9 L270.1 66.2 L272.8 66.3 L273.7 64.0 L275.6 62.9 L278.3 63.9 L281.0 65.0 L283.2 66.0 L285.3 65.4 L287.3 63.7 L289.5 64.2 L291.7 64.2 L293.8 64.0 L295.8 62.6 L297.8 61.2 L300.2 60.8 L302.1 62.6 L303.4 65.0 L304.5 66.8 L307.0 67.1 L307.7 69.3 L306.9 71.4 L306.4 73.6 L305.6 75.7 L305.5 78.1 L303.8 79.6 L302.1 81.2 L301.3 83.2 L301.5 85.3 L302.7 87.4 L300.9 89.7 L301.5 91.8 L302.4 93.9 L303.3 96.1 L306.2 95.9 L307.5 97.5 L308.8 99.3 L310.3 101.5 L309.0 104.1 L310.6 106.3 L311.3 108.6 L310.9 111.1 L312.1 113.1 L312.2 115.8 L313.5 117.8 L315.2 119.6 L315.8 122.0 L316.0 124.4 L314.2 126.8 L315.2 129.2 L313.9 131.8 L313.0 134.6 L314.1 137.0 L316.7 138.3 L317.3 141.0 L319.2 139.6 L321.7 140.6 L323.7 139.6 L325.7 138.4 L328.0 138.9 L329.6 141.2 L332.2 142.0 L334.5 143.2 L336.4 144.2 L338.6 142.9 L340.4 145.0 L342.7 143.5 L344.4 145.6 L346.5 145.1" fill="none" stroke="#8a8a8a" stroke-width="0.8"/><path d="M346.5 145.1 L345.9 147.1 L345.4 149.2 L344.2 151.1 L342.6 152.8 L343.3 155.3 L342.8 157.4 L341.3 159.1 L342.4 160.9 L344.1 162.3 L344.8 164.4 L343.5 166.3 L341.7 167.4 L339.5 167.9 L339.4 170.5 L338.0 172.4 L336.7 174.4 L335.7 176.5 L334.2 178.4 L332.4 177.1 L330.0 177.4 L328.2 176.2 L325.9 176.1 L324.1 175.0 L321.8 175.0 L320.2 173.2 L318.8 171.2 L318.4 168.8 L317.9 171.4 L315.2 172.3 L314.1 174.5 L313.4 176.9 L311.4 178.4 L309.7 179.5 L307.4 179.8 L306.6 182.5 L304.0 182.2 L302.7 184.0 L300.9 185.0 L298.7 185.4 L297.4 187.2 L297.1 189.3 L296.4 191.2 L295.5 193.1 L294.3 195.0 L295.3 197.4 L293.7 199.1 L293.9 201.3 L292.7 203.1 L292.1 205.2 L291.8 207.4 L291.2 209.4 L291.1 211.7 L290.2 213.6 L288.6 215.3 L289.8 217.2 L288.5 219.4 L289.9 221.3 L290.3 223.3 L290.8 225.3 L289.3 227.5 L290.3 229.4 L288.6 231.2 L288.2 233.4 L288.1 235.9 L287.3 238.0 L285.9 239.9 L287.8 240.9 L289.2 242.6 L291.2 243.5 L292.4 245.4 L293.9 246.9 L295.0 249.1 L294.0 251.8 L295.6 253.9" fill="none" stroke="#8a8a8a" stroke-width="0.8"/><path d="M161.1 173.1 L163.2 174.5 L165.7 173.9 L168.1 173.6 L170.1 175.6 L172.6 174.9 L174.4 176.1 L175.8 177.6 L177.8 178.5 L178.5 180.8 L178.7 178.8 L179.4 176.8 L180.0 174.9 L180.5 172.9 L182.7 173.1 L184.5 174.5 L186.9 174.3 L188.6 175.7 L190.8 176.1 L192.4 177.8 L194.3 178.8 L196.5 179.3 L198.4 180.5 L199.8 182.2 L201.3 183.8 L201.6 186.2 L200.4 188.4 L200.3 190.7 L202.0 192.0 L203.4 193.6 L205.3 194.7 L207.2 195.6 L208.3 197.9 L209.5 200.1 L211.8 201.4 L213.1 203.5 L212.2 205.7 L209.7 206.9 L210.1 209.8 L208.2 211.4 L209.3 213.3 L210.9 214.6 L213.4 215.2 L214.1 217.4 L216.2 217.7 L218.3 217.4 L220.1 216.4 L222.2 216.2 L224.2 216.0 L225.8 214.0 L228.0 214.4 L228.4 216.4 L228.9 218.4 L228.7 220.5 L229.9 222.3 L232.3 223.2 L234.8 223.5 L237.3 223.2 L239.8 223.3 L239.8 225.6 L241.0 227.4 L241.8 229.4 L243.6 231.0 L243.8 233.2 L246.2 234.3 L247.6 236.2 L248.8 238.3 L250.8 239.7 L251.7 242.1 L253.9 242.1 L255.7 240.8 L257.7 240.2 L259.7 239.5 L261.7 238.9 L263.5 237.8 L265.5 237.1 L268.0 236.8 L269.5 239.2 L271.7 239.9 L274.0 240.1 L276.0 240.0 L278.0 239.9 L279.7 241.1 L281.3 242.5 L283.9 242.6 L284.8 245.0 L287.1 245.3 L288.6 246.9 L291.0 248.0 L292.5 250.0 L293.5 252.5 L295.6 253.9" fill="none" stroke="#8a8a8a" stroke-width="0.8"/><path d="M161.1 173.1 L159.8 175.1 L157.3 175.6 L155.3 176.6 L154.3 178.9 L152.8 180.6 L150.9 181.8 L148.9 182.2 L146.9 182.1 L144.9 182.2 L142.9 182.9 L141.0 183.1 L139.2 184.8 L137.2 184.9 L135.2 185.0 L133.1 184.8 L131.1 185.9 L130.3 188.2 L128.3 189.3 L127.7 191.8 L126.0 193.2 L124.1 194.4 L122.2 195.6 L121.2 197.5 L120.6 199.4 L120.0 201.4 L120.3 203.7 L119.2 205.5 L118.5 207.5 L118.0 209.5 L117.3 211.4 L118.0 213.4 L119.3 215.1 L118.2 217.6 L120.3 219.1 L120.2 221.3 L119.4 223.5 L119.9 225.5 L121.2 227.3 L123.5 228.0 L124.2 230.2 L125.1 232.2 L127.1 233.2 L125.1 235.0 L125.3 237.7 L124.7 240.1 L123.2 242.1 L121.0 242.1 L119.6 239.8 L117.3 240.1 L116.2 242.3 L114.0 243.5 L113.1 246.0 L110.9 247.2 L109.3 249.0 L108.0 250.8 L109.5 253.1 L107.6 254.8 L108.0 256.9 L106.8 258.8 L107.4 260.9 L109.2 262.0 L111.5 261.6 L113.3 262.8 L112.4 264.8 L113.3 266.8 L113.3 268.8 L112.6 271.0 L111.2 272.6 L108.9 273.2 L107.4 274.7 L105.8 275.9 L104.3 277.3 L102.8 278.8 L100.8 279.5 L99.1 280.7 L96.8 280.8 L95.5 282.6 L94.6 284.8 L91.8 284.8 L90.1 285.9 L89.4 288.5 L86.6 288.4 L85.6 290.5 L85.5 292.6 L85.5 294.6 L87.3 296.3 L87.5 298.4 L87.6 300.4 L85.8 301.8 L83.0 301.9 L81.6 303.9 L79.7 305.3 L79.7 307.3 L79.2 309.3 L79.2 311.3 L79.4 313.4 L78.9 315.4 L77.7 317.2 L76.6 319.1 L77.5 321.4 L75.6 323.1 L76.8 325.4 L76.5 327.5 L75.5 329.4 L75.9 331.6 L75.2 333.5 L73.5 335.3 L73.3 337.4 L73.8 339.6 L71.7 340.6 L70.4 342.4 L68.3 343.4 L66.7 344.9 L65.7 347.0 L63.9 348.2 L62.6 350.1 L63.9 352.0 L62.6 354.3 L63.5 356.3 L63.1 358.5 L63.6 360.5 L64.7 362.5 L64.5 364.6 L65.2 366.7 L62.9 368.4 L64.4 370.7 L63.2 372.5 L65.3 373.5 L67.6 374.3 L69.8 375.3 L71.4 377.2 L73.8 377.8 L75.2 380.0 L78.1 379.9 L79.5 382.0 L81.7 383.0 L83.5 381.9 L85.7 381.8 L87.5 380.8 L89.6 380.4 L91.5 381.8 L92.8 383.5 L94.0 385.4 L94.8 387.6 L97.1 387.5 L98.5 385.8 L100.0 384.3 L102.6 384.8 L104.0 383.0 L106.7 381.1 L108.0 384.3 L108.2 386.6 L110.4 387.6 L112.1 388.9 L113.1 390.7 L114.4 392.3 L115.1 394.3 L115.9 396.2 L117.5 398.2 L117.8 400.6 L118.4 402.9 L118.5 405.4 L120.4 404.5 L122.7 404.1 L124.4 402.8 L125.8 401.1 L127.8 400.2 L130.0 399.8 L132.2 399.8 L134.3 399.2 L136.5 398.9 L138.6 398.0 L140.9 398.8 L140.9 401.0 L138.8 402.8 L140.2 405.4 L138.8 407.3 L138.3 409.4 L139.1 411.3 L139.8 413.3 L142.2 414.3 L143.1 416.1 L144.3 417.8 L144.9 419.9 L145.5 421.9 L145.7 423.9 L144.8 426.1 L146.2 428.0" fill="none" stroke="#8a8a8a" stroke-width="0.8"/><path d="M107.4 274.7 L109.1 276.2 L111.0 277.0 L113.7 275.9 L115.3 277.7 L117.6 276.4 L120.1 277.8 L122.5 278.0 L124.7 276.8 L127.1 276.7 L128.3 278.5 L130.6 279.3 L131.2 281.5 L131.6 283.9 L133.1 285.4 L135.0 286.6 L135.5 289.0 L136.5 291.1 L139.1 292.2 L140.6 294.0 L141.0 296.4 L142.6 294.7 L145.0 294.5 L147.1 293.9 L148.9 292.5 L151.2 292.7 L153.0 291.5 L154.9 290.6 L156.8 289.5 L158.0 291.6 L160.1 292.8 L161.7 294.5 L161.8 296.9 L163.2 299.1 L161.7 301.6 L163.1 303.9 L162.7 306.3 L163.4 308.5 L165.3 309.6 L167.3 310.7 L169.0 312.0 L170.2 313.7 L171.0 315.9 L172.6 317.2 L174.9 316.1 L176.6 314.2 L176.4 312.0 L177.0 310.0 L178.6 308.3 L179.4 306.4 L179.6 304.3 L180.5 302.4 L182.1 300.6 L184.6 300.1 L185.8 297.7 L188.4 297.4 L189.2 299.5 L189.3 301.7 L188.6 304.1 L189.7 306.2 L190.4 308.3 L192.5 307.1 L193.3 304.8 L194.4 302.7 L196.3 301.4 L198.5 301.6 L199.9 303.8 L202.1 304.0 L204.2 304.3 L206.4 305.4 L208.8 306.4 L210.1 308.8 L212.1 310.3 L213.6 312.1 L215.7 313.1 L217.6 314.3 L219.0 316.2 L217.4 318.0 L215.6 319.6 L215.1 322.1" fill="none" stroke="#8a8a8a" stroke-width="0.8"/><path d="M215.1 322.1 L217.2 322.0 L219.3 322.1 L221.1 323.2 L223.0 324.1 L225.1 323.4 L227.3 323.5 L229.1 322.0 L231.6 322.8 L233.6 322.2 L235.6 321.2 L237.5 320.0 L239.8 320.2 L241.8 318.7 L241.4 316.1 L243.5 314.6 L243.8 312.3 L241.2 311.9 L238.9 310.9 L236.8 309.3 L238.1 307.3 L237.9 304.7 L240.0 303.0 L239.8 300.4 L240.4 298.4 L240.3 296.2 L241.0 294.3 L242.0 292.4 L242.8 290.5 L245.2 289.9 L247.7 289.5 L249.1 286.8 L251.7 286.6 L253.6 286.0 L255.5 285.3 L257.8 286.7 L259.5 284.5 L261.4 283.9 L263.4 283.6 L265.5 284.0 L267.7 284.8 L269.5 283.6 L271.1 285.4 L273.2 286.0 L275.4 286.5" fill="none" stroke="#8a8a8a" stroke-width="0.8"/><path d="M346.5 145.1 L348.9 145.0 L350.6 143.7 L351.6 141.5 L353.2 140.1 L355.8 140.5 L357.4 139.0 L358.3 136.5 L360.6 136.3 L361.7 134.4 L361.8 132.1 L362.5 130.1 L363.2 128.0 L363.6 125.8 L365.0 124.0 L366.6 121.5 L369.5 121.0 L371.7 121.5 L373.7 122.7 L375.5 124.0 L375.0 126.3 L377.4 127.7 L376.1 130.2 L378.3 131.7 L378.6 133.8 L378.1 136.0 L378.6 138.0 L379.9 139.8 L381.0 141.5 L382.8 142.8 L382.9 145.0 L384.1 146.7 L383.9 149.0 L386.4 150.0 L387.0 151.9 L386.9 154.3 L388.7 155.6 L390.3 153.9 L392.6 154.1 L394.9 154.3 L396.8 153.5 L398.2 151.3 L400.2 150.6 L402.2 150.0 L404.5 150.3 L406.8 150.9 L408.6 149.1 L410.9 149.8 L413.0 149.8 L415.0 148.6 L416.9 147.4 L418.9 146.4 L421.6 146.9 L423.3 145.3 L425.0 143.7 L427.3 143.3 L429.4 144.9 L432.2 145.3 L434.3 146.8 L435.7 148.3 L437.3 149.7 L436.8 152.4 L437.5 154.3 L439.0 155.7 L439.4 157.8 L441.3 159.1 L442.6 161.0 L442.4 163.1 L442.1 165.1 L441.3 167.3 L441.6 169.3 L443.1 171.2 L443.1 173.2 L441.6 174.8 L439.7 175.7 L437.8 176.7 L435.6 176.3 L433.6 174.8 L431.1 176.1 L429.1 174.9 L428.4 177.1 L428.6 179.3 L428.4 181.5 L429.1 183.7 L427.4 185.1 L426.5 187.1 L425.5 189.0 L427.5 188.6 L429.6 188.6 L431.7 188.7 L433.7 189.6 L435.8 188.0 L437.8 189.0 L435.9 190.5 L433.2 190.2 L431.5 192.2 L429.1 192.5 L426.9 193.7 L424.7 194.1 L422.3 193.1 L420.1 193.9 L417.7 192.6 L415.5 193.1 L413.3 194.2 L412.2 196.6 L413.8 198.9 L413.3 201.3 L416.2 201.2 L418.5 203.0 L416.7 204.6 L414.3 204.4 L412.0 204.6 L410.1 205.9 L408.0 206.5 L407.0 208.4 L405.2 209.6 L403.4 210.7 L401.9 212.1 L400.3 213.4 L399.2 215.3 L397.2 216.6 L396.2 218.6 L395.9 221.1 L393.9 222.3 L391.3 222.5 L389.4 224.5 L386.9 225.0" fill="none" stroke="#8a8a8a" stroke-width="0.8"/><path d="M215.1 322.1 L214.9 324.2 L215.3 326.3 L214.4 328.4 L215.6 330.6 L215.4 332.7 L215.3 334.8 L214.7 336.9 L213.6 338.8 L211.0 338.9 L209.8 340.7 L208.6 342.5 L206.8 343.5 L205.7 345.8 L203.2 347.3 L202.8 350.1" fill="none" stroke="#8a8a8a" stroke-width="0.8"/><path d="M202.8 350.1 L204.4 351.4 L206.4 352.3 L207.2 354.6 L209.0 355.7 L210.1 357.6 L213.0 357.3 L214.1 359.3 L215.2 361.2 L217.3 362.0 L217.2 364.8 L218.7 367.2 L216.4 367.5 L215.7 370.3 L213.7 370.9 L212.1 372.3 L210.2 373.3 L208.1 373.8 L207.4 376.0 L208.6 377.8 L208.1 379.9 L209.4 381.7 L211.8 381.4 L214.2 382.5 L216.5 381.6 L218.9 381.1 L221.3 381.7 L223.8 381.9 L226.2 381.9 L228.2 379.6 L230.8 380.3 L233.1 379.7 L235.7 381.0 L238.4 381.7" fill="none" stroke="#8a8a8a" stroke-width="0.8"/><path d="M202.8 350.1 L201.5 351.9 L199.5 353.0 L197.6 354.1 L198.6 356.1 L198.6 358.1 L198.6 360.2 L197.9 362.3 L198.0 364.3 L199.1 366.3 L199.7 368.3 L199.2 370.4 L198.9 372.5 L196.8 371.8 L194.5 372.6 L192.4 372.0 L190.2 371.9 L188.3 370.2 L186.1 370.4 L183.8 371.2 L181.8 369.9 L179.6 372.0 L176.5 372.5 L175.4 374.4 L173.7 376.0 L172.5 377.8 L171.7 379.8 L172.4 382.2 L171.7 384.3 L170.0 386.1 L169.9 388.3 L167.6 387.1 L165.2 386.1 L163.3 384.3 L162.4 386.3 L159.9 387.2 L159.4 389.6 L159.8 391.7 L159.2 393.7 L159.7 395.8 L159.6 397.8 L158.6 399.9 L158.3 401.9 L159.7 404.0 L160.1 406.0 L159.4 408.1 L157.2 408.6 L155.8 410.7 L154.0 412.0 L151.5 412.0 L150.6 414.0 L151.7 416.0 L150.8 418.0 L151.7 420.0 L150.6 422.0 L151.6 424.0 L152.3 426.0 L151.5 428.0" fill="none" stroke="#8a8a8a" stroke-width="0.8"/><path d="M285.3 307.2 L285.3 309.7 L283.2 311.1 L282.0 313.0 L280.5 314.7 L281.1 317.5 L279.3 319.1 L279.3 321.6 L280.1 324.0 L280.0 326.5 L280.3 329.0 L281.6 330.8 L281.8 332.8 L281.8 334.9 L281.4 337.1 L283.7 338.6 L283.3 340.8 L285.3 341.4 L287.0 342.6 L288.9 343.5 L291.4 342.4 L293.4 342.8 L294.8 345.2 L297.1 344.8 L296.5 347.3 L298.1 349.2 L299.6 351.2 L299.1 353.7" fill="none" stroke="#8a8a8a" stroke-width="0.8"/><path d="M299.1 353.7 L301.4 353.8 L303.0 351.9 L305.4 352.3 L307.1 350.9 L309.3 350.6 L310.7 348.4 L313.2 348.9 L314.7 347.0 L316.9 346.8 L318.8 346.0 L321.1 346.4 L323.1 345.7 L324.6 343.7 L326.8 343.8 L327.4 346.1 L327.0 348.4 L326.8 350.7 L328.8 351.1 L330.8 351.2 L332.9 351.1 L334.8 351.7 L336.6 352.7 L338.5 351.6 L340.2 350.4 L340.4 347.5 L342.6 346.8 L345.0 346.5 L347.4 346.6 L349.5 344.6 L352.2 346.0 L354.4 344.8 L352.2 343.8 L351.4 341.5 L349.7 340.0 L348.3 338.3 L346.5 336.9 L344.3 336.1 L342.4 334.7 L340.7 333.2 L338.5 332.3 L336.6 331.0 L336.0 328.8 L334.7 327.0 L336.6 325.9 L338.6 324.9 L340.1 323.0 L342.6 323.0 L344.6 325.0" fill="none" stroke="#8a8a8a" stroke-width="0.8"/><path d="M316.9 346.8 L316.1 348.7 L315.8 350.7 L315.8 352.9 L314.0 354.5 L313.4 356.5 L313.6 358.7 L312.9 360.6 L315.3 361.1 L316.9 362.9 L319.3 363.4 L321.3 364.6 L322.8 366.5 L322.7 368.5 L323.2 370.6 L322.1 372.5 L321.6 374.4 L322.4 376.6 L320.8 378.4 L320.8 380.4 L318.5 381.4 L316.2 379.9 L313.9 379.8 L311.6 380.4 L309.3 381.4 L307.0 380.4 L305.2 379.2 L303.3 378.2 L302.2 375.9 L299.4 376.3 L298.1 374.4 L296.8 376.2 L296.0 378.1 L296.1 380.2 L295.4 382.2 L296.3 384.5 L295.1 386.3 L296.8 387.9 L299.1 387.3 L300.8 388.8 L303.1 388.3 L302.1 390.9 L303.9 393.6 L303.1 396.2 L301.3 397.3 L299.7 398.6 L299.9 401.5 L298.1 402.6 L296.0 403.5 L295.8 405.9 L293.2 406.3 L292.9 408.8 L291.2 410.0 L289.7 407.5 L287.2 406.1 L284.9 406.1 L283.3 404.5 L281.7 402.8 L279.1 403.5 L277.4 402.1 L277.5 404.2 L276.6 406.1 L276.6 408.1 L276.8 410.2 L275.4 412.0 L273.2 412.0 L271.2 411.4 L269.5 410.0" fill="none" stroke="#8a8a8a" stroke-width="0.8"/><path d="M270.0 406.7 L270.4 409.1 L272.2 410.6 L273.0 412.7 L275.0 414.0 L277.3 415.5 L277.8 418.4 L280.0 420.0 L279.5 422.1 L277.5 423.2 L276.1 424.6 L275.5 426.6 L274.0 428.0" fill="none" stroke="#8a8a8a" stroke-width="0.8"/><path d="M371.0 205.0 L372.9 204.0 L374.4 202.4 L376.0 201.0 L377.4 202.6 L378.7 204.3 L380.8 205.2 L382.0 207.0 L380.8 209.2 L380.5 211.6 L380.0 214.0 L378.0 213.5 L376.1 212.3 L374.0 212.0 L372.7 209.8 L372.5 207.1 L371.0 205.0 Z" fill="none" stroke="#8a8a8a" stroke-width="0.7"/><path d="M396.0 225.0 L397.4 223.2 L398.5 221.2 L400.3 219.7 L401.3 217.6 L402.4 215.6 L404.0 214.0 L405.6 212.7 L406.3 210.6 L408.3 209.8 L409.1 207.8 L410.8 206.6 L412.0 205.0 L414.0 204.5 L415.6 203.1 L417.3 202.2 L419.0 201.0 L418.5 203.1 L418.1 205.2 L417.3 207.2 L416.0 209.0 L415.0 211.1 L413.2 212.6 L412.1 214.5 L410.7 216.3 L408.9 217.9 L408.0 220.0 L406.6 221.7 L404.9 222.9 L402.9 223.9 L401.7 225.8 L400.0 227.1 L398.0 228.0 L396.0 225.0 Z" fill="none" stroke="#8a8a8a" stroke-width="0.7"/><path d="M378.0 215.0 L380.0 214.6 L381.9 214.0 L384.0 214.1 L386.0 213.7 L388.0 213.8 L390.0 213.5 L388.9 216.2 L388.0 219.0 L385.8 219.6 L383.5 219.4 L381.3 219.8 L379.0 220.0 L378.1 217.6 L378.0 215.0 Z" fill="none" stroke="#8a8a8a" stroke-width="0.7"/><path d="M424.0 169.0 L426.5 168.5 L428.5 166.7 L431.0 166.0 L432.4 167.8 L433.4 169.8 L434.0 172.0 L431.6 172.5 L429.2 172.9 L427.0 174.0 L425.8 171.3 L424.0 169.0 Z" fill="none" stroke="#8a8a8a" stroke-width="0.7"/><path d="M323.0 360.0 L324.7 358.9 L326.4 357.8 L328.0 356.5 L330.0 356.0 L331.2 358.1 L332.6 360.0 L334.0 362.0 L332.1 363.2 L329.9 363.8 L328.0 365.1 L326.0 366.0 L325.5 363.8 L324.3 361.9 L323.0 360.0 Z" fill="none" stroke="#8a8a8a" stroke-width="0.7"/><path d="M284.0 416.0 L285.9 414.9 L288.2 414.8 L289.8 413.1 L292.0 412.8 L294.0 412.0 L295.3 413.5 L296.7 415.0 L298.0 416.5 L298.5 418.6 L300.0 420.0 L298.1 420.9 L296.0 420.6 L293.9 420.5 L292.1 421.8 L290.1 422.0 L288.0 422.0 L286.8 419.9 L285.3 418.0 L284.0 416.0 Z" fill="none" stroke="#8a8a8a" stroke-width="0.7"/><path d="M364.0 344.0 L366.1 343.2 L368.2 342.3 L370.0 341.0 L371.7 342.8 L372.9 344.9 L374.0 347.0 L371.8 348.2 L369.5 349.5 L367.0 350.0 L366.4 347.8 L365.3 345.8 L364.0 344.0 Z" fill="none" stroke="#8a8a8a" stroke-width="0.7"/><path d="M419.0 184.0 L421.1 182.9 L422.7 180.8 L425.0 180.0 L426.4 182.0 L428.1 183.5 L430.0 185.0 L428.0 185.8 L425.9 186.2 L424.0 187.3 L422.0 188.0 L420.2 186.2 L419.0 184.0 Z" fill="none" stroke="#8a8a8a" stroke-width="0.7"/><path d="M409.0 194.0 L410.8 192.8 L412.9 192.2 L414.8 191.2 L417.0 191.0 L418.7 193.4 L420.0 196.0 L417.9 196.5 L415.9 197.3 L413.9 197.9 L412.0 199.0 L410.7 196.4 L409.0 194.0 Z" fill="none" stroke="#8a8a8a" stroke-width="0.7"/><path d="M367.0 198.0 L368.9 197.1 L371.0 196.7 L373.0 196.0 L373.7 198.0 L374.0 200.1 L375.0 202.0 L373.0 202.6 L371.1 203.6 L369.0 204.0 L368.5 201.9 L368.2 199.8 L367.0 198.0 Z" fill="none" stroke="#8a8a8a" stroke-width="0.7"/><path d="M308.0 370.0 L310.2 368.7 L312.8 368.4 L315.0 367.0 L316.5 368.7 L317.3 370.9 L318.0 373.0 L315.8 374.3 L313.2 374.7 L311.0 376.0 L310.5 373.8 L309.3 371.9 L308.0 370.0 Z" fill="none" stroke="#8a8a8a" stroke-width="0.7"/><path d="M294.0 394.0 L295.9 392.8 L298.2 392.4 L300.0 391.0 L300.9 392.9 L301.6 394.9 L302.0 397.0 L299.8 397.6 L297.9 398.9 L296.0 400.0 L295.6 397.9 L294.9 395.9 L294.0 394.0 Z" fill="none" stroke="#8a8a8a" stroke-width="0.7"/><path d="M264.0 416.0 L266.2 415.8 L268.0 414.5 L270.1 414.1 L272.0 413.0 L272.8 414.9 L273.6 416.7 L275.1 418.2 L276.0 420.0 L273.9 420.5 L272.0 421.4 L270.1 422.5 L268.0 423.0 L266.7 421.4 L266.1 419.4 L264.6 418.0 L264.0 416.0 Z" fill="none" stroke="#8a8a8a" stroke-width="0.7"/><circle cx="409.7" cy="229.4" r="1" fill="none" stroke="#8a8a8a" stroke-width="0.6"/><circle cx="418.5" cy="224.0" r="1" fill="none" stroke="#8a8a8a" stroke-width="0.6"/><circle cx="435.2" cy="215.3" r="1" fill="none" stroke="#8a8a8a" stroke-width="0.6"/><circle cx="466.0" cy="184.6" r="1" fill="none" stroke="#8a8a8a" stroke-width="0.6"/><circle cx="344.0" cy="364.0" r="1" fill="none" stroke="#8a8a8a" stroke-width="0.6"/><circle cx="354.0" cy="356.0" r="1" fill="none" stroke="#8a8a8a" stroke-width="0.6"/><circle cx="401.0" cy="262.7" r="1.3" fill="#33a3fa" stroke="#5c6f86" stroke-width="0.5"/><circle cx="405.0" cy="257.0" r="1.3" fill="#33a3fa" stroke="#5c6f86" stroke-width="0.5"/><circle cx="403.0" cy="272.0" r="1.3" fill="#33a3fa" stroke="#5c6f86" stroke-width="0.5"/><circle cx="447.5" cy="243.4" r="1.3" fill="#33a3fa" stroke="#5c6f86" stroke-width="0.5"/><circle cx="392.0" cy="334.0" r="1.3" fill="#33a3fa" stroke="#5c6f86" stroke-width="0.5"/><circle cx="400.0" cy="339.0" r="1.3" fill="#33a3fa" stroke="#5c6f86" stroke-width="0.5"/></svg><!--MAPEND--></div>
<div class="card" style="left:1361px;top:380px;width:529px;height:288px"><div class="ch"><svg style="left:12px;top:16px" width="16" height="12" viewBox="0 0 16 12"><path d="M0.7 0.2 V11.3 H16" fill="none" stroke="#1677ff" stroke-width="1.2"/><path d="M3 9 L6.3 5.3 L8.4 7.6 L12.5 3" fill="none" stroke="#1677ff" stroke-width="1.7"/><path d="M10 1 H14.8 V5.8 Z" fill="#1677ff"/></svg><span class="t" style="left:36px">折线图</span></div><svg class="abs" style="left:0;top:0" width="529" height="288" font-size="12" font-family="Liberation Sans, sans-serif"><text x="17" y="76.5" font-size="16" font-weight="bold" fill="#333">北京上海温度趋势上半年对比</text><path d="M17.4 109.2 Q19.0 106.2 20.4 109.0 T23.4 109.2" fill="none" stroke="#1e86ff" stroke-width="1.6" stroke-linecap="round"/><text x="32.6" y="112.89999999999999" fill="#333">北京</text><path d="M70.4 109.2 Q72.0 106.2 73.4 109.0 T76.4 109.2" fill="none" stroke="#19c6cf" stroke-width="1.6" stroke-linecap="round"/><text x="85.8" y="112.89999999999999" fill="#333">上海</text><line x1="80" y1="129.8" x2="511" y2="129.8" stroke="#efefef" stroke-dasharray="3 4"/><line x1="76" y1="129.8" x2="80" y2="129.8" stroke="#999"/><text x="72" y="132.8" text-anchor="end" fill="#999">25°C</text><line x1="80" y1="145.1" x2="511" y2="145.1" stroke="#efefef" stroke-dasharray="3 4"/><line x1="76" y1="145.1" x2="80" y2="145.1" stroke="#999"/><text x="72" y="148.1" text-anchor="end" fill="#999">20°C</text><line x1="80" y1="160.1" x2="511" y2="160.1" stroke="#efefef" stroke-dasharray="3 4"/><line x1="76" y1="160.1" x2="80" y2="160.1" stroke="#999"/><text x="72" y="163.1" text-anchor="end" fill="#999">15°C</text><line x1="80" y1="175.1" x2="511" y2="175.1" stroke="#efefef" stroke-dasharray="3 4"/><line x1="76" y1="175.1" x2="80" y2="175.1" stroke="#999"/><text x="72" y="178.1" text-anchor="end" fill="#999">10°C</text><line x1="80" y1="190.3" x2="511" y2="190.3" stroke="#efefef" stroke-dasharray="3 4"/><line x1="76" y1="190.3" x2="80" y2="190.3" stroke="#999"/><text x="72" y="193.3" text-anchor="end" fill="#999">5°C</text><line x1="80" y1="205.0" x2="511" y2="205.0" stroke="#efefef" stroke-dasharray="3 4"/><line x1="76" y1="205.0" x2="80" y2="205.0" stroke="#999"/><text x="72" y="208.0" text-anchor="end" fill="#999">0°C</text><line x1="80" y1="220.0" x2="511" y2="220.0" stroke="#efefef" stroke-dasharray="3 4"/><line x1="76" y1="220.0" x2="80" y2="220.0" stroke="#999"/><text x="72" y="223.0" text-anchor="end" fill="#999">-5°C</text><text transform="translate(21.5 175) rotate(-90)" text-anchor="middle" fill="#333">温度</text><line x1="116" y1="220.5" x2="116" y2="224" stroke="#999"/><text x="116" y="238.6" text-anchor="middle" fill="#999">一月</text><line x1="188.20000000000005" y1="220.5" x2="188.20000000000005" y2="224" stroke="#999"/><text x="188.20000000000005" y="238.6" text-anchor="middle" fill="#999">二月</text><line x1="260.4000000000001" y1="220.5" x2="260.4000000000001" y2="224" stroke="#999"/><text x="260.4000000000001" y="238.6" text-anchor="middle" fill="#999">三月</text><line x1="332.5" y1="220.5" x2="332.5" y2="224" stroke="#999"/><text x="332.5" y="238.6" text-anchor="middle" fill="#999">四月</text><line x1="404.79999999999995" y1="220.5" x2="404.79999999999995" y2="224" stroke="#999"/><text x="404.79999999999995" y="238.6" text-anchor="middle" fill="#999">五月</text><line x1="476.5999999999999" y1="220.5" x2="476.5999999999999" y2="224" stroke="#999"/><text x="476.5999999999999" y="238.6" text-anchor="middle" fill="#999">六月</text><text x="297" y="266.5" text-anchor="middle" fill="#333">月份</text><line x1="188.20000000000005" y1="130" x2="188.20000000000005" y2="223" stroke="#999" stroke-width="1"/><path d="M116.0 197.7 C130.4 196.7 159.3 196.8 188.2 192.5 C217.1 188.2 231.5 182.7 260.4 176.0 C289.3 169.3 303.6 165.3 332.5 158.9 C361.4 152.5 376.0 149.5 404.8 143.8 C433.6 138.1 462.2 132.9 476.6 130.2" fill="none" stroke="#19c6cf" stroke-width="1.3"/><circle cx="116.0" cy="197.7" r="3" fill="#19c6cf"/><circle cx="188.2" cy="192.5" r="3" fill="#19c6cf"/><circle cx="260.4" cy="176.0" r="3" fill="#19c6cf"/><circle cx="332.5" cy="158.9" r="3" fill="#19c6cf"/><circle cx="404.8" cy="143.8" r="3" fill="#19c6cf"/><circle cx="476.6" cy="130.2" r="3" fill="#19c6cf"/><path d="M116.0 218.5 C130.4 217.0 159.3 217.2 188.2 211.2 C217.1 205.2 231.5 198.1 260.4 188.7 C289.3 179.3 303.6 172.9 332.5 164.3 C361.4 155.7 376.0 152.2 404.8 145.9 C433.6 139.6 462.2 135.6 476.6 133.0" fill="none" stroke="#1e86ff" stroke-width="1.3"/><circle cx="116.0" cy="218.5" r="3" fill="#1e86ff"/><circle cx="188.2" cy="211.2" r="3" fill="#1e86ff"/><circle cx="260.4" cy="188.7" r="3" fill="#1e86ff"/><circle cx="332.5" cy="164.3" r="3" fill="#1e86ff"/><circle cx="404.8" cy="145.9" r="3" fill="#1e86ff"/><circle cx="476.6" cy="133.0" r="3" fill="#1e86ff"/></svg><div class="abs" style="left:233px;top:55.5px;width:120px;height:91.5px;background:#fff;border-radius:4px;box-shadow:0 2px 10px rgba(0,0,0,0.12)">
<div class="abs" style="left:13px;top:14px;font-size:12px;line-height:16px;color:#666">二</div>
<div class="abs" style="left:12px;top:39.5px;width:8px;height:8px;border-radius:50%;background:#10c6c6"></div>
<div class="abs" style="left:24.5px;top:35.5px;font-size:12px;line-height:16px;color:#666">上海</div>
<div class="abs" style="right:12px;top:35.5px;font-size:12px;line-height:16px;color:#333">4.2</div>
<div class="abs" style="left:12px;top:63.5px;width:8px;height:8px;border-radius:50%;background:#1e86ff"></div>
<div class="abs" style="left:24.5px;top:59.5px;font-size:12px;line-height:16px;color:#666">北京</div>
<div class="abs" style="right:12px;top:59.5px;font-size:12px;line-height:16px;color:#333">-2.2</div>
</div></div>
<div class="card" style="left:1361px;top:684px;width:529px;height:400px"><div class="ch"><svg style="left:12px;top:16px" width="12" height="12" viewBox="0 0 12 12"><circle cx="6" cy="6" r="5.2" fill="none" stroke="#1677ff" stroke-width="1.5"/><circle cx="6" cy="6" r="1.9" fill="#1677ff"/></svg><span class="t" style="left:32px">散点图</span></div><svg class="abs" style="left:0;top:0" width="529" height="400" font-size="12" font-family="Liberation Sans, sans-serif"><text x="17" y="76.3" font-size="16" font-weight="bold" fill="#333">身高体重分布散点图</text><circle cx="20.5" cy="109.5" r="3.6" fill="none" stroke="#4a90ee" stroke-width="1.3"/><text x="32" y="113.8" fill="#333">男</text><circle cx="61.5" cy="109.5" r="3.6" fill="none" stroke="#3ccfd6" stroke-width="1.3"/><text x="73.5" y="113.8" fill="#333">女</text><line x1="74" y1="129.7" x2="74" y2="230" stroke="#efefef" stroke-dasharray="3 4"/><line x1="136.7" y1="129.7" x2="136.7" y2="230" stroke="#efefef" stroke-dasharray="3 4"/><line x1="199.4" y1="128.4" x2="199.4" y2="230" stroke="#efefef" stroke-dasharray="3 4"/><line x1="262.4" y1="128.4" x2="262.4" y2="230" stroke="#efefef" stroke-dasharray="3 4"/><line x1="325" y1="128.4" x2="325" y2="230" stroke="#efefef" stroke-dasharray="3 4"/><line x1="387.8" y1="128.4" x2="387.8" y2="230" stroke="#efefef" stroke-dasharray="3 4"/><line x1="450" y1="128.4" x2="450" y2="230" stroke="#efefef" stroke-dasharray="3 4"/><line x1="512.5" y1="128.4" x2="512.5" y2="230" stroke="#efefef" stroke-dasharray="3 4"/><line x1="74" y1="129.7" x2="512.5" y2="129.7" stroke="#efefef" stroke-dasharray="3 4"/><line x1="70" y1="129.7" x2="74" y2="129.7" stroke="#999"/><text x="66" y="132.7" text-anchor="end" fill="#999">100</text><line x1="74" y1="144.9" x2="512.5" y2="144.9" stroke="#efefef" stroke-dasharray="3 4"/><line x1="70" y1="144.9" x2="74" y2="144.9" stroke="#999"/><text x="66" y="147.9" text-anchor="end" fill="#999">90</text><line x1="74" y1="160.0" x2="512.5" y2="160.0" stroke="#efefef" stroke-dasharray="3 4"/><line x1="70" y1="160.0" x2="74" y2="160.0" stroke="#999"/><text x="66" y="163.0" text-anchor="end" fill="#999">80</text><line x1="74" y1="175.2" x2="512.5" y2="175.2" stroke="#efefef" stroke-dasharray="3 4"/><line x1="70" y1="175.2" x2="74" y2="175.2" stroke="#999"/><text x="66" y="178.2" text-anchor="end" fill="#999">70</text><line x1="74" y1="190.2" x2="512.5" y2="190.2" stroke="#efefef" stroke-dasharray="3 4"/><line x1="70" y1="190.2" x2="74" y2="190.2" stroke="#999"/><text x="66" y="193.2" text-anchor="end" fill="#999">60</text><line x1="74" y1="205.3" x2="512.5" y2="205.3" stroke="#efefef" stroke-dasharray="3 4"/><line x1="70" y1="205.3" x2="74" y2="205.3" stroke="#999"/><text x="66" y="208.3" text-anchor="end" fill="#999">50</text><line x1="74" y1="220.4" x2="512.5" y2="220.4" stroke="#efefef" stroke-dasharray="3 4"/><line x1="70" y1="220.4" x2="74" y2="220.4" stroke="#999"/><text x="66" y="223.4" text-anchor="end" fill="#999">40</text><text transform="translate(21 174.5) rotate(-90)" text-anchor="middle" fill="#333">体重(kg)</text><circle cx="139.1" cy="167.0" r="3.3" fill="none" stroke="#3ccfd6" stroke-width="1.3"/><circle cx="211.8" cy="174.9" r="3.3" fill="none" stroke="#3ccfd6" stroke-width="1.3"/><circle cx="230.9" cy="191.1" r="3.3" fill="none" stroke="#3ccfd6" stroke-width="1.3"/><circle cx="261.8" cy="191.1" r="3.3" fill="none" stroke="#3ccfd6" stroke-width="1.3"/><circle cx="273.6" cy="198.5" r="3.3" fill="none" stroke="#3ccfd6" stroke-width="1.3"/><circle cx="292.7" cy="197.0" r="3.3" fill="none" stroke="#3ccfd6" stroke-width="1.3"/><circle cx="295.6" cy="186.7" r="3.3" fill="none" stroke="#3ccfd6" stroke-width="1.3"/><circle cx="298.6" cy="185.8" r="3.3" fill="none" stroke="#3ccfd6" stroke-width="1.3"/><circle cx="327.1" cy="193.2" r="3.3" fill="none" stroke="#3ccfd6" stroke-width="1.3"/><circle cx="339.8" cy="179.6" r="3.3" fill="none" stroke="#3ccfd6" stroke-width="1.3"/><circle cx="343.6" cy="169.3" r="3.3" fill="none" stroke="#3ccfd6" stroke-width="1.3"/><circle cx="130.0" cy="198.5" r="3.3" fill="none" stroke="#3ccfd6" stroke-width="1.3"/><circle cx="232.4" cy="165.5" r="3.3" fill="none" stroke="#4a90ee" stroke-width="1.3"/><circle cx="264.7" cy="186.4" r="3.3" fill="none" stroke="#4a90ee" stroke-width="1.3"/><circle cx="347.1" cy="155.8" r="3.3" fill="none" stroke="#4a90ee" stroke-width="1.3"/><circle cx="359.8" cy="153.7" r="3.3" fill="none" stroke="#4a90ee" stroke-width="1.3"/><circle cx="376.0" cy="146.1" r="3.3" fill="none" stroke="#4a90ee" stroke-width="1.3"/><circle cx="376.0" cy="161.1" r="3.3" fill="none" stroke="#4a90ee" stroke-width="1.3"/><circle cx="391.3" cy="154.9" r="3.3" fill="none" stroke="#4a90ee" stroke-width="1.3"/><circle cx="391.3" cy="169.9" r="3.3" fill="none" stroke="#4a90ee" stroke-width="1.3"/><circle cx="425.1" cy="143.1" r="3.3" fill="none" stroke="#4a90ee" stroke-width="1.3"/><circle cx="425.1" cy="180.8" r="3.3" fill="none" stroke="#4a90ee" stroke-width="1.3"/><circle cx="506.7" cy="132.3" r="3.3" fill="none" stroke="#4a90ee" stroke-width="1.3"/></svg></div>
<div class="card" style="left:271px;top:836px;width:529px;height:300px"><div class="ch"><svg style="left:12px;top:15px" width="16" height="13" viewBox="0 0 16 13"><path d="M0.7 0.2 V12.3 H16" fill="none" stroke="#1677ff" stroke-width="1.2"/><rect x="3" y="6.5" width="1.8" height="4.8" fill="#1677ff"/><rect x="6" y="4" width="1.8" height="7.3" fill="#1677ff"/><rect x="9" y="5.5" width="1.8" height="5.8" fill="#1677ff"/><rect x="12" y="2.5" width="1.8" height="8.8" fill="#1677ff"/></svg><span class="t" style="left:36px">柱状图</span></div></div>
</div>
<div id="ft" class="abs">Gadmin V9.0 [当前系统版本：9.0.9]</div>
<div class="abs" style="left:1906px;top:60px;width:14px;height:820px;background:#f3f3f3"></div>
<div class="abs" style="left:1906px;top:60px;width:6px;height:488px;background:#a3a3a3;border-radius:3px"></div>
<div class="abs" style="left:1910px;top:300px;width:7px;height:59px;border-radius:3.5px;background:linear-gradient(#f4f4f4,#e4e4e4)"></div>
<div class="abs" style="left:1910px;top:333px;width:7px;height:26px;border-radius:0 0 3.5px 3.5px;background:linear-gradient(#0fd08a,#12a7f2)"></div>
<div class="abs" style="left:1803px;top:853px;width:109px;height:4px;background:#1b1b1b;border-radius:4px 0 0 0;overflow:hidden"><div style="width:30px;height:4px;background:#69ad3f"></div></div>
<div class="abs" style="left:1906px;top:898px;width:14px;height:13px;background:#1b1b1b"></div>
<div class="abs" style="left:1793px;top:857.5px;width:126px;height:52.5px;background:#fff;border-radius:8px;box-shadow:0 0 6px rgba(0,0,0,0.08),0 0 60px 12px rgba(0,0,0,0.07)">
<svg class="abs" style="left:15px;top:7px" width="38" height="38" viewBox="0 0 38 38"><circle cx="19" cy="19" r="18.7" fill="#3a3d4a"/><g fill="none" stroke="#16b89c" stroke-width="1.2"><circle cx="18.8" cy="15.5" r="7.2"/><path d="M11.8 13.5 Q13 12 14.5 13 Q16 10.8 18 12.2 Q20 10.8 21.6 12.6 Q23.5 11.5 25.6 13.4"/><path d="M11.6 14 Q9.5 15.5 11.6 17.2 M26 14 Q28 15.5 26 17.2"/><path d="M16.6 17.8 Q18.8 19.8 21 17.8"/><path d="M12.5 30.5 Q12 24.5 16 23.4 H21.6 Q25.6 24.5 25.1 30.5 Z M18.8 23.5 V28"/><path d="M18.8 8.3 Q19.8 7.3 19.5 6.6"/></g></svg>
<div class="abs" style="left:63px;top:16.5px;font-size:16px;line-height:19px;color:#333">流之云</div>
</div>
<div class="abs" style="left:0;top:0;width:1920px;height:911px;pointer-events:none;overflow:hidden;z-index:20"><div class="wm" style="left:37.0px;top:49px">ld:12026-04-07gadmin</div><div class="wm" style="left:369.5px;top:49px">ld:12026-04-07gadmin</div><div class="wm" style="left:702.0px;top:49px">ld:12026-04-07gadmin</div><div class="wm" style="left:1034.5px;top:49px">ld:12026-04-07gadmin</div><div class="wm" style="left:1367.0px;top:49px">ld:12026-04-07gadmin</div><div class="wm" style="left:1699.5px;top:49px">ld:12026-04-07gadmin</div><div class="wm" style="left:37.0px;top:179px">ld:12026-04-07gadmin</div><div class="wm" style="left:369.5px;top:179px">ld:12026-04-07gadmin</div><div class="wm" style="left:702.0px;top:179px">ld:12026-04-07gadmin</div><div class="wm" style="left:1034.5px;top:179px">ld:12026-04-07gadmin</div><div class="wm" style="left:1367.0px;top:179px">ld:12026-04-07gadmin</div><div class="wm" style="left:1699.5px;top:179px">ld:12026-04-07gadmin</div><div class="wm" style="left:37.0px;top:309px">ld:12026-04-07gadmin</div><div class="wm" style="left:369.5px;top:309px">ld:12026-04-07gadmin</div><div class="wm" style="left:702.0px;top:309px">ld:12026-04-07gadmin</div><div class="wm" style="left:1034.5px;top:309px">ld:12026-04-07gadmin</div><div class="wm" style="left:1367.0px;top:309px">ld:12026-04-07gadmin</div><div class="wm" style="left:1699.5px;top:309px">ld:12026-04-07gadmin</div><div class="wm" style="left:37.0px;top:439px">ld:12026-04-07gadmin</div><div class="wm" style="left:369.5px;top:439px">ld:12026-04-07gadmin</div><div class="wm" style="left:702.0px;top:439px">ld:12026-04-07gadmin</div><div class="wm" style="left:1034.5px;top:439px">ld:12026-04-07gadmin</div><div class="wm" style="left:1367.0px;top:439px">ld:12026-04-07gadmin</div><div class="wm" style="left:1699.5px;top:439px">ld:12026-04-07gadmin</div><div class="wm" style="left:37.0px;top:569px">ld:12026-04-07gadmin</div><div class="wm" style="left:369.5px;top:569px">ld:12026-04-07gadmin</div><div class="wm" style="left:702.0px;top:569px">ld:12026-04-07gadmin</div><div class="wm" style="left:1034.5px;top:569px">ld:12026-04-07gadmin</div><div class="wm" style="left:1367.0px;top:569px">ld:12026-04-07gadmin</div><div class="wm" style="left:1699.5px;top:569px">ld:12026-04-07gadmin</div></div>
</body></html>
